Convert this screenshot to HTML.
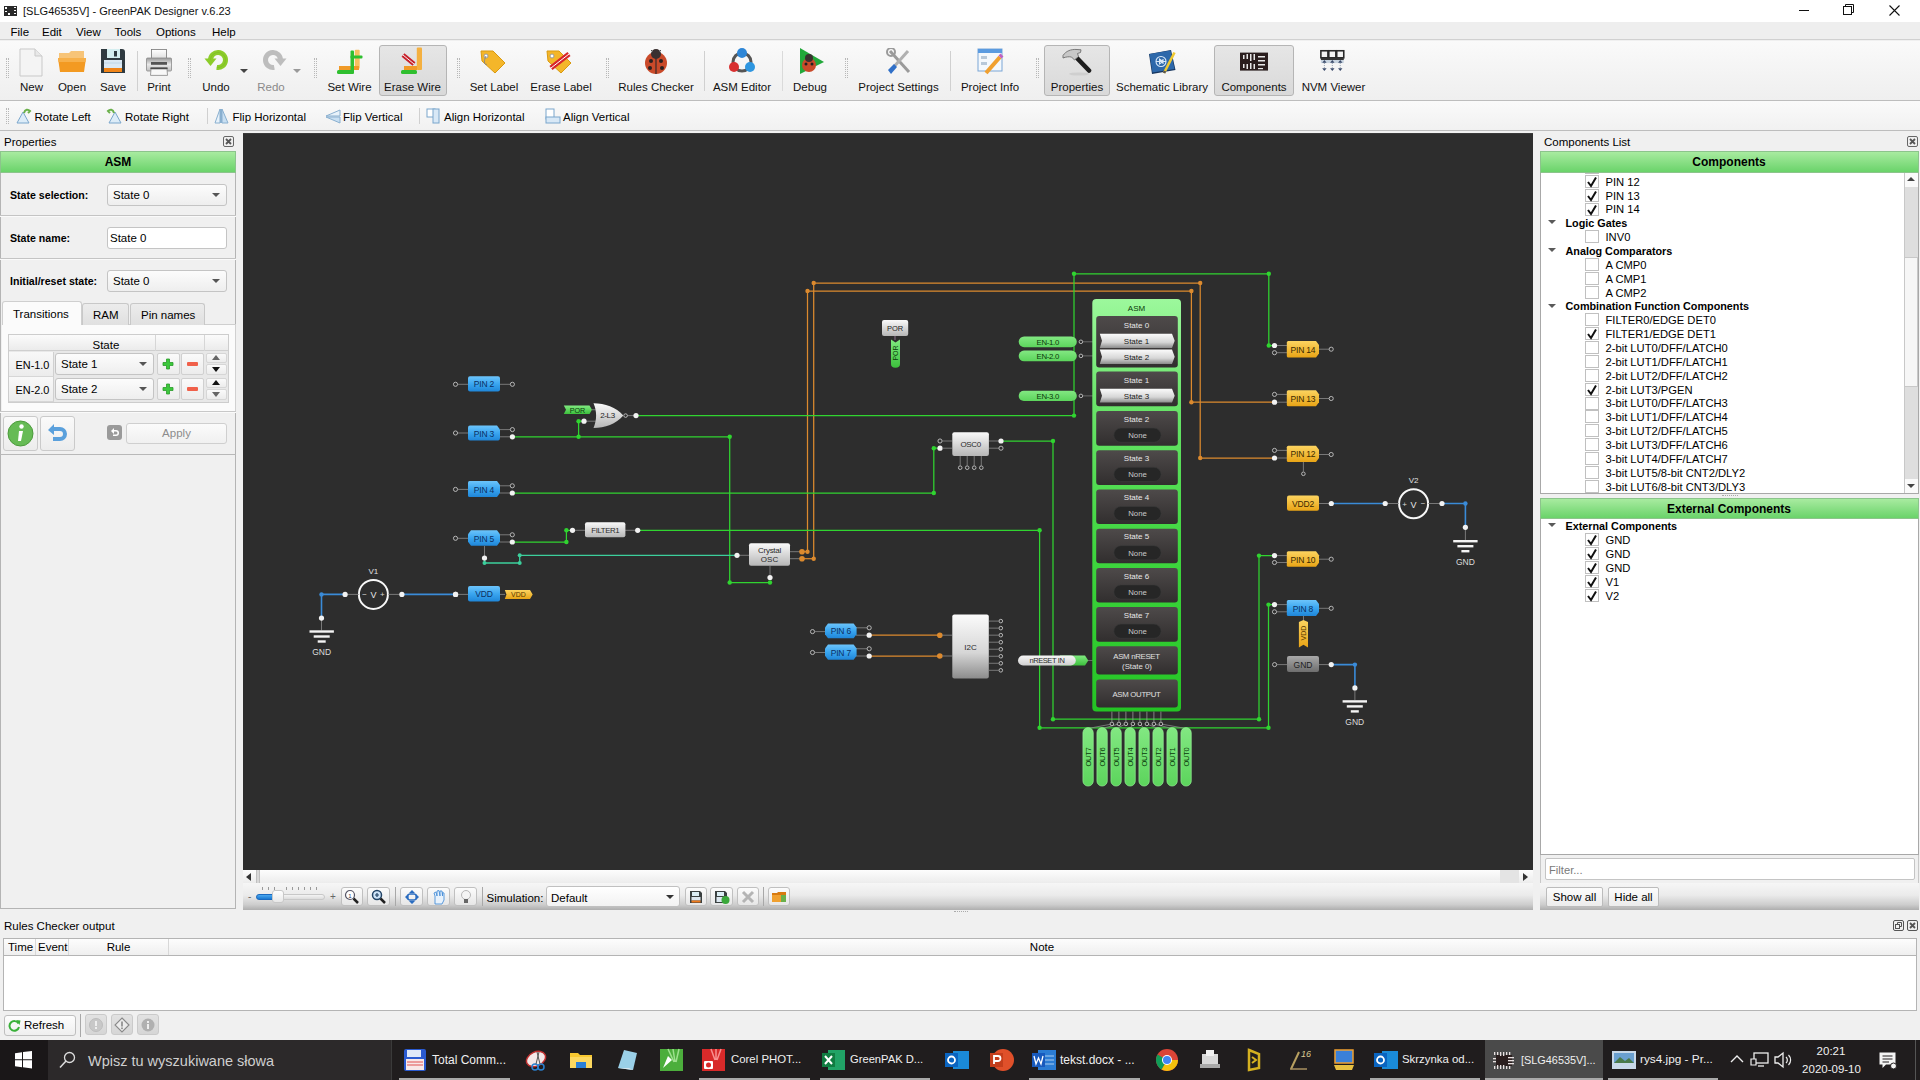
<!DOCTYPE html>
<html><head><meta charset="utf-8">
<style>
*{box-sizing:border-box;margin:0;padding:0}
html,body{width:1920px;height:1080px;overflow:hidden;background:#f0f0f0;font-family:"Liberation Sans",sans-serif;font-size:11.5px;color:#000;position:relative}
.a{position:absolute}
.t{position:absolute;white-space:nowrap;line-height:1}
.c{transform:translateX(-50%)}
#title{left:0;top:0;width:1920px;height:22px;background:#fff}
#menu{left:0;top:22px;width:1920px;height:18px;background:#eeeeee;border-bottom:1px solid #d0d0d0}
#tb1{left:0;top:41px;width:1920px;height:60px;background:linear-gradient(#fafafa,#f3f3f3 60%,#efefef);border-bottom:1px solid #bdbdbd}
#tb2{left:0;top:101px;width:1920px;height:30px;background:linear-gradient(#fafafa,#f1f1f1);border-bottom:1px solid #bdbdbd}
.hl{position:absolute;background:linear-gradient(#e6e6e6,#d9d9d9);border:1px solid #b5b5b5;border-radius:3px}
.sep{position:absolute;width:1px;background:#d0d0d0}
.dsep{position:absolute;width:3px;border-left:1px dotted #b8b8b8;border-right:1px dotted #b8b8b8}
.bold{font-weight:bold}
.panel{position:absolute;background:#f0f0f0}
.combo{position:absolute;background:linear-gradient(#fdfdfd,#efefef);border:1px solid #c5c5c5;border-radius:2px}
.arr{position:absolute;width:0;height:0;border-left:4px solid transparent;border-right:4px solid transparent;border-top:4px solid #505050}
.cb{position:absolute;width:13px;height:13px;border:1px solid #bcbcbc;background:#fff}
.ck{position:absolute;font-size:13px;font-weight:bold;line-height:1}
#canvas{left:243px;top:133px;width:1290px;height:737px;background:#2d2d2d}
#taskbar{left:0;top:1040px;width:1920px;height:40px;background:#211d1e}
</style></head><body>

<div id="title" class="a"></div>
<svg class="a" style="left:2px;top:5px" width="17" height="12"><rect x="2" y="1" width="13" height="10" fill="#2a2a2a"/><g fill="#fff"><rect x="3" y="2" width="2" height="2"/><rect x="3" y="6" width="2" height="1"/><rect x="12" y="2" width="2" height="1"/><rect x="12" y="5" width="2" height="1"/><rect x="12" y="8" width="2" height="1"/><rect x="6" y="8" width="2" height="2"/></g></svg>
<div class="t" style="left:23px;top:5.5px;font-size:11.05px;color:#111">[SLG46535V] - GreenPAK Designer v.6.23</div>
<div class="a" style="left:1799px;top:10px;width:10px;height:1px;background:#111"></div>
<svg class="a" style="left:1843px;top:4px" width="12" height="12"><rect x="0.5" y="2.5" width="8" height="8" fill="none" stroke="#111"/><path d="M2.5 2.5V0.5H10.5V8.5H8.5" fill="none" stroke="#111"/></svg>
<svg class="a" style="left:1889px;top:5px" width="12" height="12"><path d="M0.5 0.5L10.5 10.5M10.5 0.5L0.5 10.5" stroke="#111" stroke-width="1.1"/></svg>
<div id="menu" class="a"></div>
<div class="t" style="left:10.5px;top:27px;font-size:11.5px;">File</div>
<div class="t" style="left:42px;top:27px;font-size:11.5px;">Edit</div>
<div class="t" style="left:76px;top:27px;font-size:11.5px;">View</div>
<div class="t" style="left:114.5px;top:27px;font-size:11.5px;">Tools</div>
<div class="t" style="left:156px;top:27px;font-size:11.5px;">Options</div>
<div class="t" style="left:212px;top:27px;font-size:11.5px;">Help</div>
<div id="tb1" class="a"></div>
<div class="hl" style="left:379px;top:45px;width:68px;height:51px"></div>
<div class="hl" style="left:1044px;top:45px;width:66px;height:51px"></div>
<div class="hl" style="left:1214px;top:45px;width:80px;height:51px"></div>
<div class="sep" style="left:137px;top:51px;height:40px"></div>
<div class="sep" style="left:704px;top:51px;height:40px"></div>
<div class="sep" style="left:950px;top:51px;height:40px"></div>
<div class="sep" style="left:782px;top:51px;height:40px;background:#dadada"></div>
<div class="dsep" style="left:6px;top:58px;height:20px"></div>
<div class="dsep" style="left:188px;top:58px;height:20px"></div>
<div class="dsep" style="left:314px;top:58px;height:20px"></div>
<div class="dsep" style="left:457px;top:58px;height:20px"></div>
<div class="dsep" style="left:606px;top:58px;height:20px"></div>
<div class="dsep" style="left:845px;top:58px;height:20px"></div>
<div class="dsep" style="left:1036px;top:58px;height:20px"></div>
<div class="t c" style="left:31.5px;top:82px;font-size:11.5px;color:#111">New</div>
<div class="t c" style="left:72px;top:82px;font-size:11.5px;color:#111">Open</div>
<div class="t c" style="left:113px;top:82px;font-size:11.5px;color:#111">Save</div>
<div class="t c" style="left:159px;top:82px;font-size:11.5px;color:#111">Print</div>
<div class="t c" style="left:216px;top:82px;font-size:11.5px;color:#111">Undo</div>
<div class="t c" style="left:271px;top:82px;font-size:11.5px;color:#8a8a8a">Redo</div>
<div class="t c" style="left:349.5px;top:82px;font-size:11.5px;color:#111">Set Wire</div>
<div class="t c" style="left:412.5px;top:82px;font-size:11.5px;color:#111">Erase Wire</div>
<div class="t c" style="left:494px;top:82px;font-size:11.5px;color:#111">Set Label</div>
<div class="t c" style="left:561px;top:82px;font-size:11.5px;color:#111">Erase Label</div>
<div class="t c" style="left:656px;top:82px;font-size:11.5px;color:#111">Rules Checker</div>
<div class="t c" style="left:742px;top:82px;font-size:11.5px;color:#111">ASM Editor</div>
<div class="t c" style="left:810px;top:82px;font-size:11.5px;color:#111">Debug</div>
<div class="t c" style="left:898.5px;top:82px;font-size:11.5px;color:#111">Project Settings</div>
<div class="t c" style="left:990px;top:82px;font-size:11.5px;color:#111">Project Info</div>
<div class="t c" style="left:1077px;top:82px;font-size:11.5px;color:#111">Properties</div>
<div class="t c" style="left:1162px;top:82px;font-size:11.5px;color:#111">Schematic Library</div>
<div class="t c" style="left:1254px;top:82px;font-size:11.5px;color:#111">Components</div>
<div class="t c" style="left:1333.5px;top:82px;font-size:11.5px;color:#111">NVM Viewer</div>
<svg class="a" style="left:19px;top:48px" width="30" height="30"><path d="M1 1H16L23 8V28H1Z" fill="#f4f4f4" stroke="#c9c9c9"/><path d="M16 1V8H23" fill="#e8e8e8" stroke="#c9c9c9"/></svg>
<svg class="a" style="left:58px;top:49px" width="30" height="30"><path d="M1 4H11L13 2H26V12H1Z" fill="#f7c478"/><path d="M0 9H28L26 23H2Z" fill="#f39a22"/><path d="M0 9H28L27.5 13H0.5Z" fill="#f7b04a"/></svg>
<svg class="a" style="left:100px;top:48px" width="30" height="30"><path d="M1 1H22Q25 1 25 4V25H1Z" fill="#2f3a40"/><rect x="7" y="1" width="13" height="9" fill="#d4eef0"/><rect x="14" y="3" width="3" height="5.5" fill="#2f3a40"/><rect x="4" y="12" width="18" height="9" fill="#dbe9f4"/><path d="M4 15H22" stroke="#b8d0e4" stroke-width="0.8"/><rect x="4" y="20" width="18" height="4" fill="#f08418"/></svg>
<svg class="a" style="left:146px;top:48px" width="30" height="30"><defs><linearGradient id="pg1" x1="0" y1="0" x2="0" y2="1"><stop offset="0" stop-color="#ffffff"/><stop offset="1" stop-color="#d8d8d8"/></linearGradient><linearGradient id="pg2" x1="0" y1="0" x2="0" y2="1"><stop offset="0" stop-color="#9a9a9a"/><stop offset="0.5" stop-color="#e8e8e8"/><stop offset="1" stop-color="#c0c0c0"/></linearGradient></defs><rect x="5.5" y="1.5" width="15" height="11" fill="url(#pg1)" stroke="#777" stroke-width="0.8"/><rect x="0.5" y="10" width="25" height="13" rx="1" fill="url(#pg2)" stroke="#8a8a8a" stroke-width="0.8"/><rect x="5" y="14" width="16" height="2.8" fill="#555"/><rect x="4.5" y="19.5" width="17" height="1.6" fill="#222"/><path d="M5 21H21L21.5 27.4H4.5Z" fill="#f8f8f8" stroke="#888" stroke-width="0.8"/></svg>
<svg class="a" style="left:204px;top:49px" width="30" height="30"><path d="M6.5 11A7.5 7.5 0 1 1 12.7 18.4" fill="none" stroke="#8ccc2a" stroke-width="5"/><path d="M0.5 9.5H12.5L6.5 17Z" fill="#8ccc2a"/><path d="M6.5 11A7.5 7.5 0 1 1 12.7 18.4" fill="none" stroke="#6aa818" stroke-width="0.6" opacity="0.5"/></svg>
<svg class="a" style="left:259px;top:49px" width="30" height="30"><path d="M21.5 11A7.5 7.5 0 1 0 15.3 18.4" fill="none" stroke="#bdbdbd" stroke-width="5"/><path d="M15.5 9.5H27.5L21.5 17Z" fill="#bdbdbd"/></svg>
<svg class="a" style="left:337px;top:48px" width="30" height="30"><rect x="17.8" y="1.7" width="4.9" height="19" rx="1" fill="#f6c060"/><rect x="2" y="18" width="20" height="4" fill="#f09a28"/><rect x="13.5" y="2.5" width="3.5" height="23" rx="1" fill="#2fbf2f"/><rect x="13.5" y="7.4" width="12" height="3.2" rx="1" fill="#2fbf2f"/><rect x="0" y="22" width="17" height="4" rx="1.5" fill="#2fbf2f"/></svg>
<svg class="a" style="left:400px;top:47px" width="30" height="30"><rect x="16.8" y="0.6" width="5.2" height="22.4" rx="1" fill="#f4b040"/><rect x="4" y="19" width="13" height="4" fill="#f09a28"/><path d="M3 8L14 17" stroke="#c8202a" stroke-width="4.5"/><path d="M3 8L14 17" stroke="#f4f4f4" stroke-width="1"/><rect x="1" y="23" width="16" height="4" rx="1.5" fill="#2fbf2f"/></svg>
<svg class="a" style="left:479px;top:48px" width="30" height="30"><path d="M2 3H14L26 15L16 25L3 13Z" fill="#f4b62a" stroke="#d99a10"/><circle cx="7" cy="8" r="2" fill="#fff" stroke="#999"/><path d="M7 8C4 14 6 18 8 16" stroke="#888" fill="none"/></svg>
<svg class="a" style="left:545px;top:48px" width="30" height="30"><path d="M2 3H14L26 15L16 25L3 13Z" fill="#f4b62a" stroke="#d99a10"/><circle cx="7" cy="8" r="2" fill="#fff" stroke="#999"/><path d="M6 20L24 6" stroke="#d8262a" stroke-width="5"/><path d="M6 20L24 6" stroke="#ffffff" stroke-width="1"/></svg>
<svg class="a" style="left:643px;top:47px" width="30" height="30"><ellipse cx="13" cy="16" rx="11" ry="11" fill="#c94a2a"/><path d="M13 6V27" stroke="#3a2a2a" stroke-width="1.2"/><circle cx="13" cy="7" r="5" fill="#3a3030"/><circle cx="8" cy="14" r="2" fill="#2a2020"/><circle cx="18" cy="14" r="2" fill="#2a2020"/><circle cx="7" cy="21" r="2" fill="#2a2020"/><circle cx="19" cy="21" r="2" fill="#2a2020"/><path d="M8 3L10 5M18 3L16 5" stroke="#555" /></svg>
<svg class="a" style="left:728px;top:47px" width="30" height="30"><circle cx="14" cy="15" r="9" fill="none" stroke="#555" stroke-width="3"/><circle cx="14" cy="6" r="5" fill="#2e86d6"/><circle cx="6" cy="20" r="5" fill="#d83030"/><circle cx="22" cy="20" r="5" fill="#2e96e0"/></svg>
<svg class="a" style="left:797px;top:47px" width="30" height="30"><path d="M3 1L27 15L3 27Z" fill="#22a83a"/><ellipse cx="12" cy="18" rx="7" ry="7" fill="#c94a2a"/><circle cx="12" cy="11" r="4" fill="#3a3030"/><circle cx="9" cy="17" r="1.5" fill="#222"/><circle cx="15" cy="17" r="1.5" fill="#222"/></svg>
<svg class="a" style="left:885px;top:48px" width="30" height="30"><path d="M5 3L24 24" stroke="#9a9a9a" stroke-width="3"/><path d="M23 3L6 22" stroke="#b0b0b0" stroke-width="3"/><circle cx="6" cy="4" r="4" fill="none" stroke="#9a9a9a" stroke-width="2"/><path d="M3 22L9 16L12 19L6 26Z" fill="#3070c8"/></svg>
<svg class="a" style="left:976px;top:47px" width="30" height="30"><rect x="2" y="2" width="24" height="22" fill="#f4f8fc" stroke="#7aa6d6"/><rect x="2" y="2" width="24" height="4" fill="#5b9be0"/><rect x="5" y="9" width="6" height="3" fill="#b8c8d8"/><rect x="5" y="15" width="6" height="3" fill="#b8c8d8"/><path d="M10 26L24 10" stroke="#f0a030" stroke-width="4"/><path d="M24 10L26 8" stroke="#c060c0" stroke-width="4"/></svg>
<svg class="a" style="left:1062px;top:47px" width="30" height="30"><ellipse cx="17" cy="27" rx="10" ry="1.6" fill="#cfcfcf"/><path d="M13.5 9.5L27 23.5" stroke="#1e1e1e" stroke-width="4.6" stroke-linecap="round"/><path d="M1 8.5C4 4 9 2 15 2.5L19 2.8L18.5 5.5L15.5 6.5L16.5 9.5L12.5 13L9.5 10C7 9.5 4 9.8 1 11Z" fill="#c8c8c8" stroke="#6e6e6e" stroke-width="0.9"/></svg>
<svg class="a" style="left:1148px;top:49px" width="30" height="30"><path d="M1 5L23 1L27.5 21L4 25Z" fill="#16355e"/><path d="M1.5 5L22.5 1.5L26.5 20L4.5 23.5Z" fill="#2d68aa"/><circle cx="13" cy="12.5" r="5" fill="none" stroke="#d8e8f8" stroke-width="1.1"/><path d="M8 12.5H18M11.5 10V15L15 12.5Z M15 10V15" stroke="#d8e8f8" fill="none" stroke-width="1.1"/><path d="M16 24L26.5 3.5" stroke="#f0c830" stroke-width="2.6"/><path d="M16 24L17 22" stroke="#555" stroke-width="2.6"/></svg>
<svg class="a" style="left:1239px;top:50px" width="30" height="30"><rect x="1" y="2.6" width="28" height="18" fill="#2a1e1e"/><g fill="#e8e8e8"><rect x="4" y="5" width="1.5" height="4"/><rect x="4" y="14" width="1.5" height="4"/><rect x="7.5" y="4" width="1.5" height="5"/><rect x="11" y="4" width="1.5" height="7"/><rect x="14.5" y="4" width="1.5" height="6"/><rect x="7.5" y="14" width="1.5" height="5"/><rect x="11" y="13" width="1.5" height="6"/><rect x="14.5" y="14" width="1.5" height="5"/><rect x="19" y="6" width="7" height="1.5"/><rect x="19" y="10" width="7" height="1.5"/><rect x="19" y="14" width="7" height="1.5"/><rect x="19" y="18" width="5" height="1.2"/></g><rect x="0" y="0" width="2" height="23" fill="none"/></svg>
<svg class="a" style="left:1320px;top:49px" width="30" height="30"><g transform="scale(0.88)"><g fill="#f4f4f4" stroke="#2a2a2a" stroke-width="1.8"><rect x="1" y="2" width="8" height="8"/><rect x="10" y="2" width="8" height="8"/><rect x="19" y="2" width="8" height="8"/></g><rect x="1" y="10" width="26" height="2.5" fill="#333"/><rect x="1" y="12.5" width="26" height="3.5" fill="#c8d4e0"/><g fill="#3a4a6a"><path d="M2.5 15.5L5 12.5L7.5 15.5Z"/><path d="M11.5 15.5L14 12.5L16.5 15.5Z"/><path d="M20.5 15.5L23 12.5L25.5 15.5Z"/><path d="M2.5 22L5 25L7.5 22Z"/><path d="M11.5 22L14 25L16.5 22Z"/><path d="M20.5 22L23 25L25.5 22Z"/></g><g stroke="#8090a0" stroke-dasharray="1 1.2"><path d="M5 16V22M14 16V22M23 16V22"/></g></g></svg>
<div class="arr" style="left:240px;top:69px;border-top-color:#444"></div>
<div class="arr" style="left:293px;top:69px;border-top-color:#999"></div>
<div id="tb2" class="a"></div>
<div class="dsep" style="left:6px;top:108px;height:16px"></div>
<div class="sep" style="left:207px;top:108px;height:16px"></div>
<div class="sep" style="left:419px;top:108px;height:16px"></div>
<div class="t" style="left:34.5px;top:112px;font-size:11.5px;">Rotate Left</div>
<div class="t" style="left:125px;top:112px;font-size:11.5px;">Rotate Right</div>
<div class="t" style="left:232.5px;top:112px;font-size:11.5px;">Flip Horizontal</div>
<div class="t" style="left:343px;top:112px;font-size:11.5px;">Flip Vertical</div>
<div class="t" style="left:444px;top:112px;font-size:11.5px;">Align Horizontal</div>
<div class="t" style="left:563px;top:112px;font-size:11.5px;">Align Vertical</div>
<svg class="a" style="left:16px;top:108px" width="17" height="17"><path d="M1 15L7 4L13 15Z" fill="#dcecf8" stroke="#7aa6cc"/><path d="M8 5C9 1 12 1 14 3L12 5" stroke="#6ab04a" stroke-width="2" fill="none"/></svg>
<svg class="a" style="left:106px;top:108px" width="17" height="17"><path d="M3 15L9 4L15 15Z" fill="#dcecf8" stroke="#7aa6cc"/><path d="M8 5C7 1 4 1 2 3L4 5" stroke="#6ab04a" stroke-width="2" fill="none"/></svg>
<svg class="a" style="left:214px;top:108px" width="17" height="17"><path d="M1 15L6 1V15Z" fill="#e8f2fa" stroke="#8ab0d0"/><path d="M8 1L14 15H8Z" fill="#c8dff2" stroke="#8ab0d0"/><rect x="6" y="1" width="2" height="14" fill="#8ab0d0"/></svg>
<svg class="a" style="left:325px;top:108px" width="17" height="17"><path d="M1 8L15 2V8Z" fill="#e8f2fa" stroke="#8ab0d0"/><path d="M1 9H15V15Z" fill="#c8dff2" stroke="#8ab0d0"/></svg>
<svg class="a" style="left:426px;top:108px" width="17" height="17"><rect x="1" y="1" width="8" height="8" fill="#fff" stroke="#7aa6cc"/><rect x="7" y="1" width="6" height="14" fill="#d8e8f6" stroke="#7aa6cc"/></svg>
<svg class="a" style="left:545px;top:108px" width="17" height="17"><rect x="1" y="1" width="8" height="10" fill="#fff" stroke="#7aa6cc"/><rect x="1" y="9" width="14" height="6" fill="#d8e8f6" stroke="#7aa6cc"/></svg>
<div class="t" style="left:4px;top:137px;font-size:11.5px;">Properties</div>
<svg class="a" style="left:222px;top:135px" width="13" height="13"><rect x="1.5" y="1.5" width="10" height="10" rx="1.5" fill="none" stroke="#666"/><path d="M4 4L9 9M9 4L4 9" stroke="#555" stroke-width="1.8"/></svg>
<div class="a" style="left:0px;top:151px;width:236px;height:758px;border:1px solid #b4b4b4;border-top:none;background:#f0f0f0"></div>
<div class="a" style="left:0px;top:151px;width:236px;height:22px;background:linear-gradient(#a8eba0,#6ad36a);border:1px solid #8cc48c"></div>
<div class="t c bold" style="left:118px;top:156px;font-size:12px">ASM</div>
<div class="t" style="left:10px;top:190px;font-size:10.6px;font-weight:bold">State selection:</div>
<div class="a" style="left:0px;top:215px;width:236px;height:1px;background:#c4c4c4"></div>
<div class="a" style="left:0px;top:216px;width:236px;height:1px;background:#fafafa"></div>
<div class="t" style="left:10px;top:233px;font-size:10.6px;font-weight:bold">State name:</div>
<div class="a" style="left:0px;top:258px;width:236px;height:1px;background:#c4c4c4"></div>
<div class="a" style="left:0px;top:259px;width:236px;height:1px;background:#fafafa"></div>
<div class="t" style="left:10px;top:276px;font-size:10.6px;font-weight:bold">Initial/reset state:</div>
<div class="a" style="left:107px;top:184px;width:120px;height:22px;background:linear-gradient(#fcfcfc,#eeeeee);border:1px solid #c4c4c4;border-radius:3px"></div>
<div class="t" style="left:113px;top:189.5px;font-size:11.5px;">State 0</div>
<div class="arr" style="left:212px;top:193.0px;border-top-color:#555"></div>
<div class="a" style="left:107px;top:227px;width:120px;height:22px;background:#fff;border:1px solid #c4c4c4;border-radius:3px"></div>
<div class="t" style="left:110px;top:233px;font-size:11.5px;">State 0</div>
<div class="a" style="left:107px;top:270px;width:120px;height:22px;background:linear-gradient(#fcfcfc,#eeeeee);border:1px solid #c4c4c4;border-radius:3px"></div>
<div class="t" style="left:113px;top:275.5px;font-size:11.5px;">State 0</div>
<div class="arr" style="left:212px;top:279.0px;border-top-color:#555"></div>
<div class="a" style="left:2px;top:324px;width:234px;height:88px;background:#fbfbfb;border-top:1px solid #cfcfcf;border-right:1px solid #d0d0d0"></div>
<div class="a" style="left:82px;top:303px;width:47px;height:22px;background:linear-gradient(#ececec,#e0e0e0);border:1px solid #c8c8c8;border-bottom:none;border-radius:3px 3px 0 0"></div>
<div class="a" style="left:130px;top:303px;width:75px;height:22px;background:linear-gradient(#ececec,#e0e0e0);border:1px solid #c8c8c8;border-bottom:none;border-radius:3px 3px 0 0"></div>
<div class="a" style="left:2px;top:301px;width:80px;height:24px;background:#fbfbfb;border:1px solid #cfcfcf;border-bottom:none;border-radius:3px 3px 0 0"></div>
<div class="t" style="left:13px;top:309px;font-size:11.5px;">Transitions</div>
<div class="t" style="left:93px;top:310px;font-size:11.5px;">RAM</div>
<div class="t" style="left:141px;top:310px;font-size:11.5px;">Pin names</div>
<div class="a" style="left:8px;top:334px;width:221px;height:69px;background:#e8e8e8;border:1px solid #cdcdcd"></div>
<div class="a" style="left:9px;top:335px;width:219px;height:16px;background:linear-gradient(#fbfbfb,#ebebeb);border-bottom:1px solid #cfcfcf"></div>
<div class="a" style="left:155px;top:335px;width:1px;height:16px;background:#d6d6d6"></div>
<div class="a" style="left:204px;top:335px;width:1px;height:16px;background:#d6d6d6"></div>
<div class="t" style="left:92.5px;top:340px;font-size:11.5px;">State</div>
<div class="a" style="left:9px;top:352px;width:45px;height:25px;background:linear-gradient(#f8f8f8,#ececec);border-bottom:1px solid #d6d6d6;border-right:1px solid #d0d0d0"></div>
<div class="t" style="left:15.5px;top:360.3px;font-size:10.9px;">EN-1.0</div>
<div class="a" style="left:55px;top:353px;width:99px;height:22px;background:linear-gradient(#fcfcfc,#eeeeee);border:1px solid #c4c4c4;border-radius:3px"></div>
<div class="t" style="left:61px;top:358.5px;font-size:11.5px;">State 1</div>
<div class="arr" style="left:139px;top:362.0px;border-top-color:#555"></div>
<div class="a" style="left:157px;top:353px;width:23px;height:22px;background:linear-gradient(#fafafa,#ececec);border:1px solid #d0d0d0;border-radius:2px"></div>
<div class="a" style="left:181px;top:353px;width:23px;height:22px;background:linear-gradient(#fafafa,#ececec);border:1px solid #d0d0d0;border-radius:2px"></div>
<svg class="a" style="left:162px;top:358px" width="12" height="12"><path d="M4.5 1H7.5V4.5H11V7.5H7.5V11H4.5V7.5H1V4.5H4.5Z" fill="#3cc83c" stroke="#2a9a2a" stroke-width="0.8"/></svg>
<div class="a" style="left:187px;top:362px;width:11px;height:4px;background:#f0604a;border-radius:1px"></div>
<div class="a" style="left:206px;top:353px;width:21px;height:10px;background:linear-gradient(#fafafa,#ececec);border:1px solid #d6d6d6;border-radius:2px"></div>
<div class="a" style="left:206px;top:364px;width:21px;height:11px;background:linear-gradient(#fafafa,#ececec);border:1px solid #d6d6d6;border-radius:2px"></div>
<div class="a" style="left:212px;top:355px;width:0;height:0;border-left:4.5px solid transparent;border-right:4.5px solid transparent;border-bottom:5px solid #666"></div>
<div class="a" style="left:212px;top:367px;width:0;height:0;border-left:4.5px solid transparent;border-right:4.5px solid transparent;border-top:5px solid #111"></div>
<div class="a" style="left:9px;top:377px;width:45px;height:25px;background:linear-gradient(#f8f8f8,#ececec);border-bottom:1px solid #d6d6d6;border-right:1px solid #d0d0d0"></div>
<div class="t" style="left:15.5px;top:385.3px;font-size:10.9px;">EN-2.0</div>
<div class="a" style="left:55px;top:378px;width:99px;height:22px;background:linear-gradient(#fcfcfc,#eeeeee);border:1px solid #c4c4c4;border-radius:3px"></div>
<div class="t" style="left:61px;top:383.5px;font-size:11.5px;">State 2</div>
<div class="arr" style="left:139px;top:387.0px;border-top-color:#555"></div>
<div class="a" style="left:157px;top:378px;width:23px;height:22px;background:linear-gradient(#fafafa,#ececec);border:1px solid #d0d0d0;border-radius:2px"></div>
<div class="a" style="left:181px;top:378px;width:23px;height:22px;background:linear-gradient(#fafafa,#ececec);border:1px solid #d0d0d0;border-radius:2px"></div>
<svg class="a" style="left:162px;top:383px" width="12" height="12"><path d="M4.5 1H7.5V4.5H11V7.5H7.5V11H4.5V7.5H1V4.5H4.5Z" fill="#3cc83c" stroke="#2a9a2a" stroke-width="0.8"/></svg>
<div class="a" style="left:187px;top:387px;width:11px;height:4px;background:#f0604a;border-radius:1px"></div>
<div class="a" style="left:206px;top:378px;width:21px;height:10px;background:linear-gradient(#fafafa,#ececec);border:1px solid #d6d6d6;border-radius:2px"></div>
<div class="a" style="left:206px;top:389px;width:21px;height:11px;background:linear-gradient(#fafafa,#ececec);border:1px solid #d6d6d6;border-radius:2px"></div>
<div class="a" style="left:212px;top:380px;width:0;height:0;border-left:4.5px solid transparent;border-right:4.5px solid transparent;border-bottom:5px solid #111"></div>
<div class="a" style="left:212px;top:392px;width:0;height:0;border-left:4.5px solid transparent;border-right:4.5px solid transparent;border-top:5px solid #666"></div>
<div class="a" style="left:0px;top:411px;width:236px;height:1px;background:#c8c8c8"></div>
<div class="a" style="left:0px;top:412px;width:236px;height:1px;background:#fafafa"></div>
<div class="a" style="left:3px;top:416px;width:35px;height:35px;background:linear-gradient(#fafafa,#ececec);border:1px solid #cacaca;border-radius:3px"></div>
<div class="a" style="left:40px;top:416px;width:35px;height:35px;background:linear-gradient(#fafafa,#ececec);border:1px solid #cacaca;border-radius:3px"></div>
<svg class="a" style="left:7px;top:420px" width="28" height="28"><circle cx="13.5" cy="13.5" r="12.5" fill="#66bb55" stroke="#4a9a3a"/><circle cx="14.5" cy="6.5" r="2.2" fill="#fff"/><path d="M12 11H16L14 21H11Z" fill="#fff"/></svg>
<svg class="a" style="left:45px;top:422px" width="26" height="24"><path d="M3 8L9 2V5H15A7 7 0 0 1 15 19H8V15H15A3 3 0 0 0 15 9H9V13Z" fill="#5aa0dc"/></svg>
<div class="a" style="left:107px;top:425px;width:15px;height:15px;background:#9a9a9a;border-radius:3px"></div>
<svg class="a" style="left:108px;top:426px" width="13" height="13"><path d="M3 5L6 2V4H8A3 3 0 0 1 8 10H5V8.5H8A1.5 1.5 0 0 0 8 5.5H6V8Z" fill="#fff"/></svg>
<div class="a" style="left:126px;top:423px;width:101px;height:21px;background:linear-gradient(#fbfbfb,#f0f0f0);border:1px solid #cfcfcf;border-radius:3px"></div>
<div class="t c" style="left:176.5px;top:428px;font-size:11.5px;color:#8c8c8c">Apply</div>
<div class="a" style="left:0px;top:454px;width:236px;height:1px;background:#b8b8b8"></div>
<div id="canvas" class="a"></div><div class="a" style="left:243px;top:133px;width:1290px;height:1px;background:#3a3a3a"></div><svg class="a" style="left:243px;top:133px;font-family:Liberation Sans" width="1290" height="737" viewBox="243 133 1290 737"><defs>
<linearGradient id="gb" x1="0" y1="0" x2="0" y2="1"><stop offset="0" stop-color="#6cc4fb"/><stop offset="0.5" stop-color="#3aa6f0"/><stop offset="1" stop-color="#1f86d8"/></linearGradient>
<linearGradient id="go" x1="0" y1="0" x2="0" y2="1"><stop offset="0" stop-color="#fcd460"/><stop offset="1" stop-color="#e8a416"/></linearGradient>
<linearGradient id="gg" x1="0" y1="0" x2="0" y2="1"><stop offset="0" stop-color="#fafafa"/><stop offset="1" stop-color="#b6b6b6"/></linearGradient>
<linearGradient id="gd" x1="0" y1="0" x2="0" y2="1"><stop offset="0" stop-color="#a8a8a8"/><stop offset="1" stop-color="#6e6e6e"/></linearGradient>
<linearGradient id="gt" x1="0" y1="0" x2="0" y2="1"><stop offset="0" stop-color="#80ea80"/><stop offset="1" stop-color="#3cbf3c"/></linearGradient>
<linearGradient id="gp" x1="0" y1="0" x2="0" y2="1"><stop offset="0" stop-color="#82e882"/><stop offset="1" stop-color="#5cd45c"/></linearGradient>
<linearGradient id="gs" x1="0" y1="0" x2="0" y2="1"><stop offset="0" stop-color="#4e4a4a"/><stop offset="1" stop-color="#312e2e"/></linearGradient>
<linearGradient id="ga" x1="0" y1="0" x2="0" y2="1"><stop offset="0" stop-color="#fbfbfb"/><stop offset="0.6" stop-color="#d6d6d6"/><stop offset="1" stop-color="#8c8c8c"/></linearGradient>
<linearGradient id="gasm" x1="0" y1="0" x2="0" y2="1"><stop offset="0" stop-color="#9cf89c"/><stop offset="0.25" stop-color="#6ae46a"/><stop offset="0.6" stop-color="#40d640"/><stop offset="1" stop-color="#24c424"/></linearGradient>
<linearGradient id="gw" x1="0" y1="0" x2="0" y2="1"><stop offset="0" stop-color="#f6f6f6"/><stop offset="1" stop-color="#cfcfcf"/></linearGradient>
</defs>
<path d="M813.7 558.7 L813.7 283 L1200.2 283 L1200.2 458 L1274.5 458" fill="none" stroke="#dc8a2e" stroke-width="1.25"/>
<path d="M807.5 551.7 L807.5 291 L1191.4 291 L1191.4 402.2 L1274.5 402.2" fill="none" stroke="#dc8a2e" stroke-width="1.25"/>
<path d="M790 551.7L800 551.7" stroke="#8c8c8c" stroke-width="0.8"/>
<path d="M802 551.7 L807.5 551.7" fill="none" stroke="#dc8a2e" stroke-width="1.2"/>
<path d="M790 558.7L800 558.7" stroke="#8c8c8c" stroke-width="0.8"/>
<path d="M802 558.7 L813.7 558.7" fill="none" stroke="#dc8a2e" stroke-width="1.2"/>
<path d="M869.2 635.2 L939.8 635.2" fill="none" stroke="#dc8a2e" stroke-width="1.25"/>
<path d="M869.2 656 L939.8 656" fill="none" stroke="#dc8a2e" stroke-width="1.25"/>
<path d="M636 415.6 L1074 415.6 L1074 273.8 L1268.8 273.8 L1268.8 345.5 L1274.5 345.5" fill="none" stroke="#30d430" stroke-width="1.25"/>
<path d="M512.4 436.8 L729.7 436.8 L729.7 582.5 L770 582.5" fill="none" stroke="#30d430" stroke-width="1.25"/>
<path d="M578.6 436.8 L578.6 421.2 L584 421.2" fill="none" stroke="#30d430" stroke-width="1.25"/>
<path d="M512.3 493 L933.8 493 L933.8 448.2 L940 448.2" fill="none" stroke="#30d430" stroke-width="1.25"/>
<path d="M512.3 542 L566.4 542 L566.4 530.3 L572.5 530.3" fill="none" stroke="#30d430" stroke-width="1.25"/>
<path d="M637.7 530.3 L1039.6 530.3 L1039.6 727.8 L1268.5 727.8 L1268.5 604.6 L1274.6 604.6" fill="none" stroke="#30d430" stroke-width="1.25"/>
<path d="M1001 441 L1053 441 L1053 719.2 L1259 719.2 L1259 555.6 L1274.6 555.6" fill="none" stroke="#30d430" stroke-width="1.25"/>
<path d="M484.5 558 L484.5 563 L519.7 563 L519.7 555.3 L737 555.3" fill="none" stroke="#3ccf9c" stroke-width="1.3"/>
<path d="M345.1 594.4 L321.5 594.4 L321.5 618.1" fill="none" stroke="#3a8bd8" stroke-width="1.6"/>
<path d="M401.9 594.4 L455.6 594.4" fill="none" stroke="#3a8bd8" stroke-width="1.6"/>
<path d="M1331.3 503.5 L1385.2 503.5" fill="none" stroke="#3a8bd8" stroke-width="1.6"/>
<path d="M1442 503.5 L1465.4 503.5 L1465.4 527.3" fill="none" stroke="#3a8bd8" stroke-width="1.6"/>
<path d="M1331.25 664.6 L1354.9 664.6 L1354.9 687.9" fill="none" stroke="#3a8bd8" stroke-width="1.6"/>
<circle cx="578.6" cy="436.8" r="2.2" fill="#30d430"/>
<circle cx="578.6" cy="421.2" r="2.2" fill="#30d430"/>
<circle cx="729.7" cy="436.8" r="2.2" fill="#30d430"/>
<circle cx="729.7" cy="582.5" r="2.2" fill="#30d430"/>
<circle cx="770" cy="582.5" r="2.2" fill="#30d430"/>
<circle cx="933.8" cy="493" r="2.2" fill="#30d430"/>
<circle cx="933.8" cy="448.2" r="2.2" fill="#30d430"/>
<circle cx="566.4" cy="542" r="2.2" fill="#30d430"/>
<circle cx="566.4" cy="530.3" r="2.2" fill="#30d430"/>
<circle cx="1074" cy="415.6" r="2.2" fill="#30d430"/>
<circle cx="1074" cy="273.8" r="2.2" fill="#30d430"/>
<circle cx="1268.8" cy="273.8" r="2.2" fill="#30d430"/>
<circle cx="1268.8" cy="345.5" r="2.2" fill="#30d430"/>
<circle cx="1039.6" cy="530.3" r="2.2" fill="#30d430"/>
<circle cx="1039.6" cy="727.8" r="2.2" fill="#30d430"/>
<circle cx="1268.5" cy="727.8" r="2.2" fill="#30d430"/>
<circle cx="1268.5" cy="604.6" r="2.2" fill="#30d430"/>
<circle cx="1053" cy="441" r="2.2" fill="#30d430"/>
<circle cx="1053" cy="719.2" r="2.2" fill="#30d430"/>
<circle cx="1259" cy="719.2" r="2.2" fill="#30d430"/>
<circle cx="1259" cy="555.6" r="2.2" fill="#30d430"/>
<circle cx="484.5" cy="563" r="2" fill="#3ccf9c"/>
<circle cx="519.7" cy="563" r="2" fill="#3ccf9c"/>
<circle cx="519.7" cy="555.3" r="2" fill="#3ccf9c"/>
<circle cx="813.7" cy="283" r="2.2" fill="#dc8a2e"/>
<circle cx="807.5" cy="291" r="2.2" fill="#dc8a2e"/>
<circle cx="1200.2" cy="283" r="2.2" fill="#dc8a2e"/>
<circle cx="1200.2" cy="458" r="2.2" fill="#dc8a2e"/>
<circle cx="1191.4" cy="291" r="2.2" fill="#dc8a2e"/>
<circle cx="1191.4" cy="402.2" r="2.2" fill="#dc8a2e"/>
<circle cx="807.5" cy="551.7" r="2.2" fill="#dc8a2e"/>
<circle cx="813.7" cy="558.7" r="2.2" fill="#dc8a2e"/>
<circle cx="802" cy="551.7" r="2.8" fill="#dc8a2e"/>
<circle cx="802" cy="558.7" r="2.8" fill="#dc8a2e"/>
<circle cx="939.8" cy="635.2" r="2.8" fill="#dc8a2e"/>
<circle cx="939.8" cy="656" r="2.8" fill="#dc8a2e"/>
<circle cx="321.5" cy="594.4" r="2.2" fill="#3a8bd8"/>
<circle cx="1465.4" cy="503.5" r="2.2" fill="#3a8bd8"/>
<circle cx="1354.9" cy="664.6" r="2.2" fill="#3a8bd8"/>
<circle cx="455.5" cy="384.3" r="2.07" fill="#2d2d2d" stroke="#c4c4c4" stroke-width="0.9"/>
<path d="M458 384.3L468 384.3" stroke="#8c8c8c" stroke-width="0.8"/>
<path d="M500 384.3L510 384.3" stroke="#8c8c8c" stroke-width="0.8"/>
<circle cx="512.4" cy="384.3" r="2.07" fill="#2d2d2d" stroke="#c4c4c4" stroke-width="0.9"/>
<rect x="468" y="376.3" width="32" height="15.199999999999989" rx="2" fill="url(#gb)"/>
<text x="484.0" y="384.4" font-size="8.5" fill="#0c2f62" text-anchor="middle" dominant-baseline="central" letter-spacing="-0.2">PIN 2</text>
<circle cx="455.5" cy="433" r="2.07" fill="#2d2d2d" stroke="#c4c4c4" stroke-width="0.9"/>
<path d="M458 433L468 433" stroke="#8c8c8c" stroke-width="0.8"/>
<path d="M500 429.6L510 429.6" stroke="#8c8c8c" stroke-width="0.8"/>
<path d="M500 436.8L510 436.8" stroke="#8c8c8c" stroke-width="0.8"/>
<circle cx="512.4" cy="429.6" r="2.07" fill="#2d2d2d" stroke="#c4c4c4" stroke-width="0.9"/>
<circle cx="512.4" cy="436.8" r="2.6" fill="#f2f2f2"/>
<path d="M470 425.6H497L500 429.6V437.5Q500 440.5 498 440.5H470Q468 440.5 468 438.5V427.6Q468 425.6 470 425.6Z" fill="url(#gb)"/>
<text x="484.0" y="433.55" font-size="8.5" fill="#0c2f62" text-anchor="middle" dominant-baseline="central" letter-spacing="-0.2">PIN 3</text>
<circle cx="455.5" cy="489.4" r="2.07" fill="#2d2d2d" stroke="#c4c4c4" stroke-width="0.9"/>
<path d="M458 489.4L468 489.4" stroke="#8c8c8c" stroke-width="0.8"/>
<path d="M500 485.8L510 485.8" stroke="#8c8c8c" stroke-width="0.8"/>
<path d="M500 493L510 493" stroke="#8c8c8c" stroke-width="0.8"/>
<circle cx="512.3" cy="485.8" r="2.07" fill="#2d2d2d" stroke="#c4c4c4" stroke-width="0.9"/>
<circle cx="512.3" cy="493" r="2.6" fill="#f2f2f2"/>
<path d="M469.5 481H497L500 485V493L497 497H469.5Q468 497 468 495.5V482.5Q468 481 469.5 481Z" fill="url(#gb)"/>
<text x="484.0" y="489.5" font-size="8.5" fill="#0c2f62" text-anchor="middle" dominant-baseline="central" letter-spacing="-0.2">PIN 4</text>
<circle cx="455.5" cy="538.3" r="2.07" fill="#2d2d2d" stroke="#c4c4c4" stroke-width="0.9"/>
<path d="M458 538.3L468 538.3" stroke="#8c8c8c" stroke-width="0.8"/>
<path d="M500 534.8L510 534.8" stroke="#8c8c8c" stroke-width="0.8"/>
<path d="M500 542L510 542" stroke="#8c8c8c" stroke-width="0.8"/>
<circle cx="512.3" cy="534.8" r="2.07" fill="#2d2d2d" stroke="#c4c4c4" stroke-width="0.9"/>
<circle cx="512.3" cy="542" r="2.6" fill="#f2f2f2"/>
<path d="M484.5 546L484.5 556" stroke="#8c8c8c" stroke-width="0.8"/>
<path d="M471 530.3H497L500 534.3V541.8L497 545.8H471L468 541.8V534.3Z" fill="url(#gb)"/>
<text x="484.0" y="538.55" font-size="8.5" fill="#0c2f62" text-anchor="middle" dominant-baseline="central" letter-spacing="-0.2">PIN 5</text>
<circle cx="484.5" cy="558" r="2.6" fill="#f2f2f2"/>
<circle cx="455.6" cy="594.4" r="2.6" fill="#f2f2f2"/>
<path d="M458 594.4L468 594.4" stroke="#8c8c8c" stroke-width="0.8"/>
<path d="M500 594.4L505 594.4" stroke="#8c8c8c" stroke-width="0.8"/>
<rect x="468" y="586" width="32" height="15.600000000000023" rx="2" fill="url(#gb)"/>
<text x="484.0" y="594.3" font-size="8.5" fill="#0c2f62" text-anchor="middle" dominant-baseline="central" letter-spacing="-0.2">VDD</text>
<path d="M504.8 590H530L532.7 594.5L530 599H504.8L506.5 594.5Z" fill="url(#go)"/>
<text x="518.5" y="594.8" font-size="7" fill="#5a3a00" text-anchor="middle" dominant-baseline="central" >VDD</text>
<circle cx="373.4" cy="594.4" r="14.5" fill="none" stroke="#f8f8f8" stroke-width="2"/>
<path d="M347 594.4L359 594.4" stroke="#8c8c8c" stroke-width="0.8"/>
<path d="M388 594.4L400 594.4" stroke="#8c8c8c" stroke-width="0.8"/>
<text x="373.4" y="595" font-size="9" fill="#e8e8e8" text-anchor="middle" dominant-baseline="central" >V</text>
<text x="364.5" y="594" font-size="8" fill="#d8d8d8" text-anchor="middle" dominant-baseline="central" >−</text>
<text x="382.3" y="594" font-size="8" fill="#d8d8d8" text-anchor="middle" dominant-baseline="central" >+</text>
<text x="373.4" y="571.3" font-size="8" fill="#e0e0e0" text-anchor="middle" dominant-baseline="central" >V1</text>
<circle cx="345.1" cy="594.4" r="2.6" fill="#f2f2f2"/>
<circle cx="401.9" cy="594.4" r="2.6" fill="#f2f2f2"/>
<circle cx="455.6" cy="594.4" r="2.6" fill="#f2f2f2"/>
<path d="M321.5 620L321.5 630.3" stroke="#8c8c8c" stroke-width="0.8"/>
<circle cx="321.5" cy="618.1" r="2.6" fill="#f2f2f2"/>
<rect x="309.5" y="630.3" width="24.4" height="2.4" fill="#f4f4f4"/>
<rect x="313.7" y="635.3" width="16" height="2.4" fill="#f4f4f4"/>
<rect x="317.7" y="640.3" width="8" height="2.4" fill="#f4f4f4"/>
<text x="321.7" y="652.1" font-size="8.5" fill="#dcdcdc" text-anchor="middle" dominant-baseline="central" >GND</text>
<path d="M563.8 405.5H589.5L592 409.75L589.5 414H563.8L566 409.75Z" fill="url(#gt)"/>
<text x="577.5" y="410" font-size="7.2" fill="#0a3a0a" text-anchor="middle" dominant-baseline="central" >POR</text>
<path d="M592 409.75L597 409.75" stroke="#8c8c8c" stroke-width="0.8"/>
<path d="M586 421.2L597 421.2" stroke="#8c8c8c" stroke-width="0.8"/>
<path d="M625 415.6L634 415.6" stroke="#8c8c8c" stroke-width="0.8"/>
<path d="M593.5 403.2C605 403.2 616 407 623.3 415.5C616 424 605 427.9 593.5 427.9C597 420 597 411 593.5 403.2Z" fill="url(#gg)"/>
<text x="607.5" y="415.8" font-size="8" fill="#222" text-anchor="middle" dominant-baseline="central" letter-spacing="-0.4">2-L3</text>
<circle cx="625.6" cy="415.6" r="1.8" fill="#2d2d2d" stroke="#c4c4c4" stroke-width="0.9"/>
<circle cx="636" cy="415.6" r="2.6" fill="#f2f2f2"/>
<circle cx="584" cy="421.2" r="2.6" fill="#f2f2f2"/>
<circle cx="572.5" cy="530.3" r="2.6" fill="#f2f2f2"/>
<path d="M575 530.3L585 530.3" stroke="#8c8c8c" stroke-width="0.8"/>
<path d="M625 530.3L635 530.3" stroke="#8c8c8c" stroke-width="0.8"/>
<circle cx="637.7" cy="530.3" r="2.6" fill="#f2f2f2"/>
<rect x="585" y="522.2" width="40.4" height="15" rx="2" fill="url(#gg)"/>
<text x="605.2" y="530" font-size="7.8" fill="#2a2a2a" text-anchor="middle" dominant-baseline="central" letter-spacing="-0.4">FILTER1</text>
<path d="M739 555.3L749 555.3" stroke="#8c8c8c" stroke-width="0.8"/>
<path d="M770 566L770 576" stroke="#8c8c8c" stroke-width="0.8"/>
<rect x="749" y="543.3" width="41" height="22.5" rx="2" fill="url(#gg)"/>
<text x="769.5" y="550" font-size="8" fill="#2a2a2a" text-anchor="middle" dominant-baseline="central" letter-spacing="-0.3">Crystal</text>
<text x="769.5" y="559.5" font-size="8" fill="#2a2a2a" text-anchor="middle" dominant-baseline="central" >OSC</text>
<circle cx="737" cy="555.3" r="2.6" fill="#f2f2f2"/>
<circle cx="770" cy="577.5" r="2.6" fill="#f2f2f2"/>
<rect x="882" y="320" width="26.2" height="16" rx="2" fill="url(#gg)"/>
<text x="895.1" y="328.3" font-size="7.5" fill="#222" text-anchor="middle" dominant-baseline="central" >POR</text>
<path d="M895 336L895 340" stroke="#a080a0" stroke-width="0.8"/>
<path d="M891 339.5L895.5 342.5L900 339.5V364Q900 367.8 895.5 367.8Q891 367.8 891 364Z" fill="url(#gt)"/>
<text x="895.5" y="353" font-size="7" fill="#0a3a0a" text-anchor="middle" dominant-baseline="central" transform="rotate(-90 895.5 353)">POR</text>
<circle cx="940" cy="441" r="2.07" fill="#2d2d2d" stroke="#c4c4c4" stroke-width="0.9"/>
<circle cx="940" cy="448.2" r="2.6" fill="#f2f2f2"/>
<path d="M942 441L952 441" stroke="#8c8c8c" stroke-width="0.8"/>
<path d="M942 448.2L952 448.2" stroke="#8c8c8c" stroke-width="0.8"/>
<path d="M989 441L999 441" stroke="#8c8c8c" stroke-width="0.8"/>
<path d="M989 448.2L999 448.2" stroke="#8c8c8c" stroke-width="0.8"/>
<circle cx="1001" cy="441" r="2.6" fill="#f2f2f2"/>
<circle cx="1001" cy="448.2" r="2.07" fill="#2d2d2d" stroke="#c4c4c4" stroke-width="0.9"/>
<path d="M960.2 456L960.2 465.5" stroke="#8c8c8c" stroke-width="0.8"/>
<circle cx="960.2" cy="467.7" r="1.8" fill="#2d2d2d" stroke="#c4c4c4" stroke-width="0.9"/>
<path d="M967.2 456L967.2 465.5" stroke="#8c8c8c" stroke-width="0.8"/>
<circle cx="967.2" cy="467.7" r="1.8" fill="#2d2d2d" stroke="#c4c4c4" stroke-width="0.9"/>
<path d="M974.2 456L974.2 465.5" stroke="#8c8c8c" stroke-width="0.8"/>
<circle cx="974.2" cy="467.7" r="1.8" fill="#2d2d2d" stroke="#c4c4c4" stroke-width="0.9"/>
<path d="M981.3 456L981.3 465.5" stroke="#8c8c8c" stroke-width="0.8"/>
<circle cx="981.3" cy="467.7" r="1.8" fill="#2d2d2d" stroke="#c4c4c4" stroke-width="0.9"/>
<rect x="952.3" y="432.2" width="36.6" height="23.7" rx="2" fill="url(#gg)"/>
<text x="970.6" y="444.5" font-size="8" fill="#2a2a2a" text-anchor="middle" dominant-baseline="central" letter-spacing="-0.4">OSC0</text>
<path d="M942 635.2L952 635.2" stroke="#8c8c8c" stroke-width="0.8"/>
<path d="M942 656L952 656" stroke="#8c8c8c" stroke-width="0.8"/>
<path d="M989 621.1L998.5 621.1" stroke="#8c8c8c" stroke-width="0.8"/>
<circle cx="1000.8" cy="621.1" r="1.8" fill="#2d2d2d" stroke="#c4c4c4" stroke-width="0.9"/>
<path d="M989 628.13L998.5 628.13" stroke="#8c8c8c" stroke-width="0.8"/>
<circle cx="1000.8" cy="628.13" r="1.8" fill="#2d2d2d" stroke="#c4c4c4" stroke-width="0.9"/>
<path d="M989 635.16L998.5 635.16" stroke="#8c8c8c" stroke-width="0.8"/>
<circle cx="1000.8" cy="635.16" r="1.8" fill="#2d2d2d" stroke="#c4c4c4" stroke-width="0.9"/>
<path d="M989 642.19L998.5 642.19" stroke="#8c8c8c" stroke-width="0.8"/>
<circle cx="1000.8" cy="642.19" r="1.8" fill="#2d2d2d" stroke="#c4c4c4" stroke-width="0.9"/>
<path d="M989 649.22L998.5 649.22" stroke="#8c8c8c" stroke-width="0.8"/>
<circle cx="1000.8" cy="649.22" r="1.8" fill="#2d2d2d" stroke="#c4c4c4" stroke-width="0.9"/>
<path d="M989 656.25L998.5 656.25" stroke="#8c8c8c" stroke-width="0.8"/>
<circle cx="1000.8" cy="656.25" r="1.8" fill="#2d2d2d" stroke="#c4c4c4" stroke-width="0.9"/>
<path d="M989 663.28L998.5 663.28" stroke="#8c8c8c" stroke-width="0.8"/>
<circle cx="1000.8" cy="663.28" r="1.8" fill="#2d2d2d" stroke="#c4c4c4" stroke-width="0.9"/>
<path d="M989 670.3100000000001L998.5 670.3100000000001" stroke="#8c8c8c" stroke-width="0.8"/>
<circle cx="1000.8" cy="670.3100000000001" r="1.8" fill="#2d2d2d" stroke="#c4c4c4" stroke-width="0.9"/>
<rect x="952.3" y="614.4" width="36.5" height="64" rx="2" fill="url(#ga)"/>
<text x="970.5" y="647" font-size="8" fill="#2a2a2a" text-anchor="middle" dominant-baseline="central" >I2C</text>
<circle cx="812.5" cy="631.6" r="2.07" fill="#2d2d2d" stroke="#c4c4c4" stroke-width="0.9"/>
<path d="M815 631.6L825 631.6" stroke="#8c8c8c" stroke-width="0.8"/>
<path d="M856 627.8L867 627.8" stroke="#8c8c8c" stroke-width="0.8"/>
<path d="M856 635.2L867 635.2" stroke="#8c8c8c" stroke-width="0.8"/>
<circle cx="869.2" cy="627.8" r="2.07" fill="#2d2d2d" stroke="#c4c4c4" stroke-width="0.9"/>
<circle cx="869.2" cy="635.2" r="2.6" fill="#f2f2f2"/>
<path d="M828 623.4H853.6L856.6 627.4V634.3L853.6 638.3H828L825 634.3V627.4Z" fill="url(#gb)"/>
<text x="840.8" y="631.3499999999999" font-size="8.5" fill="#0c2f62" text-anchor="middle" dominant-baseline="central" letter-spacing="-0.2">PIN 6</text>
<circle cx="812.5" cy="652.5" r="2.07" fill="#2d2d2d" stroke="#c4c4c4" stroke-width="0.9"/>
<path d="M815 652.5L825 652.5" stroke="#8c8c8c" stroke-width="0.8"/>
<path d="M856 648.75L867 648.75" stroke="#8c8c8c" stroke-width="0.8"/>
<path d="M856 656L867 656" stroke="#8c8c8c" stroke-width="0.8"/>
<circle cx="869.2" cy="648.75" r="2.07" fill="#2d2d2d" stroke="#c4c4c4" stroke-width="0.9"/>
<circle cx="869.2" cy="656" r="2.6" fill="#f2f2f2"/>
<path d="M828 644.5H853.6L856.6 648.5V655.7L853.6 659.7H828L825 655.7V648.5Z" fill="url(#gb)"/>
<text x="840.8" y="652.6" font-size="8.5" fill="#0c2f62" text-anchor="middle" dominant-baseline="central" letter-spacing="-0.2">PIN 7</text>
<path d="M1083 341.79999999999995L1100 341.79999999999995" stroke="#7a7a7a" stroke-width="0.8"/>
<circle cx="1080.9" cy="341.79999999999995" r="1.8" fill="#2d2d2d" stroke="#c4c4c4" stroke-width="0.9"/>
<rect x="1018.7" y="336.4" width="58.09999999999991" height="10.800000000000011" rx="5.400000000000006" fill="url(#gp)"/>
<text x="1047.75" y="342.09999999999997" font-size="7.8" fill="#0a3a0a" text-anchor="middle" dominant-baseline="central" letter-spacing="-0.3">EN-1.0</text>
<path d="M1083 355.9L1100 355.9" stroke="#7a7a7a" stroke-width="0.8"/>
<circle cx="1080.9" cy="355.9" r="1.8" fill="#2d2d2d" stroke="#c4c4c4" stroke-width="0.9"/>
<rect x="1018.7" y="350.6" width="58.09999999999991" height="10.599999999999966" rx="5.299999999999983" fill="url(#gp)"/>
<text x="1047.75" y="356.2" font-size="7.8" fill="#0a3a0a" text-anchor="middle" dominant-baseline="central" letter-spacing="-0.3">EN-2.0</text>
<path d="M1083 395.9L1100 395.9" stroke="#7a7a7a" stroke-width="0.8"/>
<circle cx="1080.9" cy="395.9" r="1.8" fill="#2d2d2d" stroke="#c4c4c4" stroke-width="0.9"/>
<rect x="1018.7" y="390.8" width="58.09999999999991" height="10.199999999999989" rx="5.099999999999994" fill="url(#gp)"/>
<text x="1047.75" y="396.2" font-size="7.8" fill="#0a3a0a" text-anchor="middle" dominant-baseline="central" letter-spacing="-0.3">EN-3.0</text>
<path d="M1060 655.5H1085L1088.3 660.5L1085 665.6H1060Z" fill="url(#gt)"/>
<path d="M1088 660.5L1096 660.5" stroke="#7a7a7a" stroke-width="0.8"/>
<rect x="1018" y="655.5" width="57.799999999999955" height="10.100000000000023" rx="5.050000000000011" fill="url(#gw)"/>
<text x="1046.9" y="660.8499999999999" font-size="7.5" fill="#2a2a2a" text-anchor="middle" dominant-baseline="central" letter-spacing="-0.4">nRESET IN</text>
<rect x="1092.3" y="299.1" width="88.7" height="412.5" rx="4" fill="url(#gasm)"/>
<text x="1136.5" y="308" font-size="8" fill="#0a3a0a" text-anchor="middle" dominant-baseline="central" >ASM</text>
<rect x="1096.2" y="316" width="81.6" height="51.5" rx="3" fill="url(#gs)"/>
<text x="1136.5" y="325.2" font-size="8" fill="#e8e8e8" text-anchor="middle" dominant-baseline="central" >State 0</text>
<path d="M1099.8 333.7H1172L1174.7 340.85L1172 348H1099.8L1102 340.85Z" fill="url(#ga)"/>
<text x="1136.5" y="341.35" font-size="8" fill="#1a1a1a" text-anchor="middle" dominant-baseline="central" >State 1</text>
<path d="M1099.8 349.6H1172L1174.7 356.75L1172 363.9H1099.8L1102 356.75Z" fill="url(#ga)"/>
<text x="1136.5" y="357.25" font-size="8" fill="#1a1a1a" text-anchor="middle" dominant-baseline="central" >State 2</text>
<rect x="1096.2" y="371.6" width="81.6" height="34.599999999999966" rx="3" fill="url(#gs)"/>
<text x="1136.5" y="380.2" font-size="8" fill="#e8e8e8" text-anchor="middle" dominant-baseline="central" >State 1</text>
<path d="M1099.8 388.7H1172L1174.7 395.65L1172 402.6H1099.8L1102 395.65Z" fill="url(#ga)"/>
<text x="1136.5" y="396.15" font-size="8" fill="#1a1a1a" text-anchor="middle" dominant-baseline="central" >State 3</text>
<rect x="1096.2" y="411.1" width="81.6" height="34.60000000000002" rx="3" fill="url(#gs)"/>
<text x="1136.5" y="419.3" font-size="8" fill="#e8e8e8" text-anchor="middle" dominant-baseline="central" >State 2</text>
<rect x="1113.8" y="428.1" width="47.3" height="14.2" rx="7.1" fill="#262626" stroke="#3a3a3a" stroke-width="0.6"/>
<text x="1137.5" y="435.5" font-size="7.8" fill="#c8c8c8" text-anchor="middle" dominant-baseline="central" >None</text>
<rect x="1096.2" y="450.3" width="81.6" height="34.60000000000002" rx="3" fill="url(#gs)"/>
<text x="1136.5" y="458.5" font-size="8" fill="#e8e8e8" text-anchor="middle" dominant-baseline="central" >State 3</text>
<rect x="1113.8" y="467.3" width="47.3" height="14.2" rx="7.1" fill="#262626" stroke="#3a3a3a" stroke-width="0.6"/>
<text x="1137.5" y="474.7" font-size="7.8" fill="#c8c8c8" text-anchor="middle" dominant-baseline="central" >None</text>
<rect x="1096.2" y="489.5" width="81.6" height="34.60000000000002" rx="3" fill="url(#gs)"/>
<text x="1136.5" y="497.7" font-size="8" fill="#e8e8e8" text-anchor="middle" dominant-baseline="central" >State 4</text>
<rect x="1113.8" y="506.5" width="47.3" height="14.2" rx="7.1" fill="#262626" stroke="#3a3a3a" stroke-width="0.6"/>
<text x="1137.5" y="513.9" font-size="7.8" fill="#c8c8c8" text-anchor="middle" dominant-baseline="central" >None</text>
<rect x="1096.2" y="528.7" width="81.6" height="34.60000000000002" rx="3" fill="url(#gs)"/>
<text x="1136.5" y="536.9000000000001" font-size="8" fill="#e8e8e8" text-anchor="middle" dominant-baseline="central" >State 5</text>
<rect x="1113.8" y="545.7" width="47.3" height="14.2" rx="7.1" fill="#262626" stroke="#3a3a3a" stroke-width="0.6"/>
<text x="1137.5" y="553.1" font-size="7.8" fill="#c8c8c8" text-anchor="middle" dominant-baseline="central" >None</text>
<rect x="1096.2" y="567.9000000000001" width="81.6" height="34.60000000000002" rx="3" fill="url(#gs)"/>
<text x="1136.5" y="576.1000000000001" font-size="8" fill="#e8e8e8" text-anchor="middle" dominant-baseline="central" >State 6</text>
<rect x="1113.8" y="584.9000000000001" width="47.3" height="14.2" rx="7.1" fill="#262626" stroke="#3a3a3a" stroke-width="0.6"/>
<text x="1137.5" y="592.3000000000001" font-size="7.8" fill="#c8c8c8" text-anchor="middle" dominant-baseline="central" >None</text>
<rect x="1096.2" y="607.1" width="81.6" height="34.60000000000002" rx="3" fill="url(#gs)"/>
<text x="1136.5" y="615.3000000000001" font-size="8" fill="#e8e8e8" text-anchor="middle" dominant-baseline="central" >State 7</text>
<rect x="1113.8" y="624.1" width="47.3" height="14.2" rx="7.1" fill="#262626" stroke="#3a3a3a" stroke-width="0.6"/>
<text x="1137.5" y="631.5" font-size="7.8" fill="#c8c8c8" text-anchor="middle" dominant-baseline="central" >None</text>
<rect x="1096.2" y="646.3" width="81.6" height="28.100000000000023" rx="3" fill="url(#gs)"/>
<text x="1136.5" y="656" font-size="7.8" fill="#e0e0e0" text-anchor="middle" dominant-baseline="central" letter-spacing="-0.3">ASM nRESET</text>
<text x="1137" y="666" font-size="7.8" fill="#e0e0e0" text-anchor="middle" dominant-baseline="central" >(State 0)</text>
<rect x="1096.2" y="679.6" width="81.6" height="27.799999999999955" rx="3" fill="url(#gs)"/>
<text x="1136.5" y="694" font-size="7.8" fill="#e0e0e0" text-anchor="middle" dominant-baseline="central" letter-spacing="-0.3">ASM OUTPUT</text>
<path d="M1111.9 711.6L1111.9 721.6" stroke="#9a9a9a" stroke-width="0.8"/>
<path d="M1111.9 724L1088.1 728.5" stroke="#8a8a8a" stroke-width="0.8"/>
<path d="M1118.9 711.6L1118.9 721.6" stroke="#9a9a9a" stroke-width="0.8"/>
<path d="M1118.9 724L1102.1 728.5" stroke="#8a8a8a" stroke-width="0.8"/>
<path d="M1125.9 711.6L1125.9 721.6" stroke="#9a9a9a" stroke-width="0.8"/>
<path d="M1125.9 724L1116.1 728.5" stroke="#8a8a8a" stroke-width="0.8"/>
<path d="M1132.9 711.6L1132.9 721.6" stroke="#9a9a9a" stroke-width="0.8"/>
<path d="M1132.9 724L1130.1 728.5" stroke="#8a8a8a" stroke-width="0.8"/>
<path d="M1139.9 711.6L1139.9 721.6" stroke="#9a9a9a" stroke-width="0.8"/>
<path d="M1139.9 724L1144.1 728.5" stroke="#8a8a8a" stroke-width="0.8"/>
<path d="M1146.9 711.6L1146.9 721.6" stroke="#9a9a9a" stroke-width="0.8"/>
<path d="M1146.9 724L1158.1 728.5" stroke="#8a8a8a" stroke-width="0.8"/>
<path d="M1153.9 711.6L1153.9 721.6" stroke="#9a9a9a" stroke-width="0.8"/>
<path d="M1153.9 724L1172.1 728.5" stroke="#8a8a8a" stroke-width="0.8"/>
<path d="M1160.9 711.6L1160.9 721.6" stroke="#9a9a9a" stroke-width="0.8"/>
<path d="M1160.9 724L1186.1 728.5" stroke="#8a8a8a" stroke-width="0.8"/>
<circle cx="1111.9" cy="723.9" r="1.8" fill="#2d2d2d" stroke="#c4c4c4" stroke-width="0.9"/>
<circle cx="1118.9" cy="723.9" r="1.8" fill="#2d2d2d" stroke="#c4c4c4" stroke-width="0.9"/>
<circle cx="1125.9" cy="723.9" r="1.8" fill="#2d2d2d" stroke="#c4c4c4" stroke-width="0.9"/>
<circle cx="1132.9" cy="723.9" r="1.8" fill="#2d2d2d" stroke="#c4c4c4" stroke-width="0.9"/>
<circle cx="1139.9" cy="723.9" r="1.8" fill="#2d2d2d" stroke="#c4c4c4" stroke-width="0.9"/>
<circle cx="1146.9" cy="723.9" r="1.8" fill="#2d2d2d" stroke="#c4c4c4" stroke-width="0.9"/>
<circle cx="1153.9" cy="723.9" r="1.8" fill="#2d2d2d" stroke="#c4c4c4" stroke-width="0.9"/>
<circle cx="1160.9" cy="723.9" r="1.8" fill="#2d2d2d" stroke="#c4c4c4" stroke-width="0.9"/>
<rect x="1082.8999999999999" y="727.6" width="10.4" height="58.5" rx="5.2" fill="url(#gp)" stroke="#9af59a" stroke-width="0.6"/>
<text x="1088.1" y="757" font-size="7.5" fill="#0a3a0a" text-anchor="middle" dominant-baseline="central" transform="rotate(-90 1088.1 757)" letter-spacing="-0.3">OUT7</text>
<rect x="1096.8999999999999" y="727.6" width="10.4" height="58.5" rx="5.2" fill="url(#gp)" stroke="#9af59a" stroke-width="0.6"/>
<text x="1102.1" y="757" font-size="7.5" fill="#0a3a0a" text-anchor="middle" dominant-baseline="central" transform="rotate(-90 1102.1 757)" letter-spacing="-0.3">OUT6</text>
<rect x="1110.8999999999999" y="727.6" width="10.4" height="58.5" rx="5.2" fill="url(#gp)" stroke="#9af59a" stroke-width="0.6"/>
<text x="1116.1" y="757" font-size="7.5" fill="#0a3a0a" text-anchor="middle" dominant-baseline="central" transform="rotate(-90 1116.1 757)" letter-spacing="-0.3">OUT5</text>
<rect x="1124.8999999999999" y="727.6" width="10.4" height="58.5" rx="5.2" fill="url(#gp)" stroke="#9af59a" stroke-width="0.6"/>
<text x="1130.1" y="757" font-size="7.5" fill="#0a3a0a" text-anchor="middle" dominant-baseline="central" transform="rotate(-90 1130.1 757)" letter-spacing="-0.3">OUT4</text>
<rect x="1138.8999999999999" y="727.6" width="10.4" height="58.5" rx="5.2" fill="url(#gp)" stroke="#9af59a" stroke-width="0.6"/>
<text x="1144.1" y="757" font-size="7.5" fill="#0a3a0a" text-anchor="middle" dominant-baseline="central" transform="rotate(-90 1144.1 757)" letter-spacing="-0.3">OUT3</text>
<rect x="1152.8999999999999" y="727.6" width="10.4" height="58.5" rx="5.2" fill="url(#gp)" stroke="#9af59a" stroke-width="0.6"/>
<text x="1158.1" y="757" font-size="7.5" fill="#0a3a0a" text-anchor="middle" dominant-baseline="central" transform="rotate(-90 1158.1 757)" letter-spacing="-0.3">OUT2</text>
<rect x="1166.8999999999999" y="727.6" width="10.4" height="58.5" rx="5.2" fill="url(#gp)" stroke="#9af59a" stroke-width="0.6"/>
<text x="1172.1" y="757" font-size="7.5" fill="#0a3a0a" text-anchor="middle" dominant-baseline="central" transform="rotate(-90 1172.1 757)" letter-spacing="-0.3">OUT1</text>
<rect x="1180.8999999999999" y="727.6" width="10.4" height="58.5" rx="5.2" fill="url(#gp)" stroke="#9af59a" stroke-width="0.6"/>
<text x="1186.1" y="757" font-size="7.5" fill="#0a3a0a" text-anchor="middle" dominant-baseline="central" transform="rotate(-90 1186.1 757)" letter-spacing="-0.3">OUT0</text>
<path d="M1277 345.5L1287 345.5" stroke="#8c8c8c" stroke-width="0.8"/>
<path d="M1277 352.7L1287 352.7" stroke="#8c8c8c" stroke-width="0.8"/>
<path d="M1319 349.2L1329 349.2" stroke="#8c8c8c" stroke-width="0.8"/>
<path d="M1288.3 341H1316L1319 345V353.4L1316 357.4H1288.3Q1286.8 357.4 1286.8 355.9V342.5Q1286.8 341 1288.3 341Z" fill="url(#go)"/>
<text x="1302.9" y="349.7" font-size="8.5" fill="#3a2800" text-anchor="middle" dominant-baseline="central" letter-spacing="-0.2">PIN 14</text>
<circle cx="1274.5" cy="345.5" r="2.6" fill="#f2f2f2"/>
<circle cx="1274.5" cy="352.7" r="2.07" fill="#2d2d2d" stroke="#c4c4c4" stroke-width="0.9"/>
<circle cx="1331.2" cy="349.2" r="2.07" fill="#2d2d2d" stroke="#c4c4c4" stroke-width="0.9"/>
<path d="M1277 394.4L1287 394.4" stroke="#8c8c8c" stroke-width="0.8"/>
<path d="M1277 402.2L1287 402.2" stroke="#8c8c8c" stroke-width="0.8"/>
<path d="M1319 398.5L1329 398.5" stroke="#8c8c8c" stroke-width="0.8"/>
<path d="M1288.3 390.3H1316L1319 394.3V402.2L1316 406.2H1288.3Q1286.8 406.2 1286.8 404.7V391.8Q1286.8 390.3 1288.3 390.3Z" fill="url(#go)"/>
<text x="1302.9" y="398.75" font-size="8.5" fill="#3a2800" text-anchor="middle" dominant-baseline="central" letter-spacing="-0.2">PIN 13</text>
<circle cx="1274.5" cy="394.4" r="2.07" fill="#2d2d2d" stroke="#c4c4c4" stroke-width="0.9"/>
<circle cx="1274.5" cy="402.2" r="2.6" fill="#f2f2f2"/>
<circle cx="1331.2" cy="398.5" r="2.07" fill="#2d2d2d" stroke="#c4c4c4" stroke-width="0.9"/>
<path d="M1277 450.4L1287 450.4" stroke="#8c8c8c" stroke-width="0.8"/>
<path d="M1277 458L1287 458" stroke="#8c8c8c" stroke-width="0.8"/>
<path d="M1319 454.5L1329 454.5" stroke="#8c8c8c" stroke-width="0.8"/>
<path d="M1288.3 445.7H1316L1319 449.7V458L1316 462H1288.3Q1286.8 462 1286.8 460.5V447.2Q1286.8 445.7 1288.3 445.7Z" fill="url(#go)"/>
<text x="1302.9" y="454.35" font-size="8.5" fill="#3a2800" text-anchor="middle" dominant-baseline="central" letter-spacing="-0.2">PIN 12</text>
<circle cx="1274.5" cy="450.4" r="2.07" fill="#2d2d2d" stroke="#c4c4c4" stroke-width="0.9"/>
<circle cx="1274.5" cy="458" r="2.6" fill="#f2f2f2"/>
<circle cx="1331.2" cy="454.5" r="2.07" fill="#2d2d2d" stroke="#c4c4c4" stroke-width="0.9"/>
<path d="M1303.4 462L1303.4 471.5" stroke="#8c8c8c" stroke-width="0.8"/>
<circle cx="1303.4" cy="473.8" r="1.8" fill="#2d2d2d" stroke="#c4c4c4" stroke-width="0.9"/>
<path d="M1277 555.6L1287 555.6" stroke="#8c8c8c" stroke-width="0.8"/>
<path d="M1277 562.5L1287 562.5" stroke="#8c8c8c" stroke-width="0.8"/>
<path d="M1319 559.2L1329 559.2" stroke="#8c8c8c" stroke-width="0.8"/>
<path d="M1288.3 551.2H1316L1319 555.2V562.8L1316 566.8H1288.3Q1286.8 566.8 1286.8 565.3V552.7Q1286.8 551.2 1288.3 551.2Z" fill="url(#go)"/>
<text x="1302.9" y="559.5" font-size="8.5" fill="#3a2800" text-anchor="middle" dominant-baseline="central" letter-spacing="-0.2">PIN 10</text>
<circle cx="1274.5" cy="555.6" r="2.6" fill="#f2f2f2"/>
<circle cx="1274.5" cy="562.5" r="2.07" fill="#2d2d2d" stroke="#c4c4c4" stroke-width="0.9"/>
<circle cx="1331.2" cy="559.2" r="2.07" fill="#2d2d2d" stroke="#c4c4c4" stroke-width="0.9"/>
<path d="M1277 604.6L1287 604.6" stroke="#8c8c8c" stroke-width="0.8"/>
<path d="M1277 611.8L1287 611.8" stroke="#8c8c8c" stroke-width="0.8"/>
<path d="M1319 608.3L1329 608.3" stroke="#8c8c8c" stroke-width="0.8"/>
<path d="M1288.3 600H1316L1319 604V612.1L1316 616.1H1288.3Q1286.8 616.1 1286.8 614.6V601.5Q1286.8 600 1288.3 600Z" fill="url(#gb)"/>
<text x="1302.9" y="608.55" font-size="8.5" fill="#0c2f62" text-anchor="middle" dominant-baseline="central" letter-spacing="-0.2">PIN 8</text>
<circle cx="1274.5" cy="604.6" r="2.6" fill="#f2f2f2"/>
<circle cx="1274.5" cy="611.8" r="2.07" fill="#2d2d2d" stroke="#c4c4c4" stroke-width="0.9"/>
<circle cx="1331.2" cy="608.3" r="2.07" fill="#2d2d2d" stroke="#c4c4c4" stroke-width="0.9"/>
<path d="M1303.5 616L1303.5 620" stroke="#8c8c8c" stroke-width="0.8"/>
<path d="M1298.9 622L1303.45 619.9L1308 622V647.6L1303.45 644.8L1298.9 647.6Z" fill="url(#go)"/>
<text x="1303.45" y="633" font-size="7" fill="#5a3a00" text-anchor="middle" dominant-baseline="central" transform="rotate(-90 1303.45 633)">VDD</text>
<path d="M1319 503.5L1329 503.5" stroke="#8c8c8c" stroke-width="0.8"/>
<rect x="1287" y="495.4" width="32" height="15.300000000000011" rx="2" fill="url(#go)"/>
<text x="1303.0" y="503.54999999999995" font-size="8.5" fill="#3a2800" text-anchor="middle" dominant-baseline="central" letter-spacing="-0.2">VDD2</text>
<circle cx="1331.3" cy="503.5" r="2.6" fill="#f2f2f2"/>
<circle cx="1413.6" cy="503.8" r="14.5" fill="none" stroke="#f8f8f8" stroke-width="2"/>
<path d="M1387 503.5L1399 503.5" stroke="#8c8c8c" stroke-width="0.8"/>
<path d="M1428 503.5L1440 503.5" stroke="#8c8c8c" stroke-width="0.8"/>
<text x="1413.6" y="504.5" font-size="9" fill="#e8e8e8" text-anchor="middle" dominant-baseline="central" >V</text>
<text x="1404.5" y="504" font-size="8" fill="#d8d8d8" text-anchor="middle" dominant-baseline="central" >+</text>
<text x="1423" y="503.5" font-size="8" fill="#d8d8d8" text-anchor="middle" dominant-baseline="central" >−</text>
<text x="1413.6" y="480.5" font-size="8" fill="#e0e0e0" text-anchor="middle" dominant-baseline="central" >V2</text>
<circle cx="1385.2" cy="503.5" r="2.6" fill="#f2f2f2"/>
<circle cx="1442" cy="503.5" r="2.6" fill="#f2f2f2"/>
<path d="M1465.4 529L1465.4 540" stroke="#8c8c8c" stroke-width="0.8"/>
<circle cx="1465.4" cy="527.3" r="2.6" fill="#f2f2f2"/>
<rect x="1453.2" y="540" width="24.4" height="2.4" fill="#f4f4f4"/>
<rect x="1457.4" y="545" width="16" height="2.4" fill="#f4f4f4"/>
<rect x="1461.4" y="550" width="8" height="2.4" fill="#f4f4f4"/>
<text x="1465.4" y="562.2" font-size="8.5" fill="#dcdcdc" text-anchor="middle" dominant-baseline="central" >GND</text>
<circle cx="1274.6" cy="664.6" r="2.07" fill="#2d2d2d" stroke="#c4c4c4" stroke-width="0.9"/>
<path d="M1277 664.6L1287 664.6" stroke="#8c8c8c" stroke-width="0.8"/>
<path d="M1319 664.6L1329 664.6" stroke="#8c8c8c" stroke-width="0.8"/>
<rect x="1287" y="656" width="32" height="16" rx="2" fill="url(#gd)"/>
<text x="1303" y="664.5" font-size="8.5" fill="#1e1e1e" text-anchor="middle" dominant-baseline="central" >GND</text>
<circle cx="1331.25" cy="664.6" r="2.6" fill="#f2f2f2"/>
<path d="M1354.9 690L1354.9 700" stroke="#8c8c8c" stroke-width="0.8"/>
<circle cx="1354.9" cy="687.9" r="2.6" fill="#f2f2f2"/>
<rect x="1342.6" y="700.2" width="24.4" height="2.4" fill="#f4f4f4"/>
<rect x="1346.8" y="705.2" width="16" height="2.4" fill="#f4f4f4"/>
<rect x="1350.8" y="710.2" width="8" height="2.4" fill="#f4f4f4"/>
<text x="1354.8" y="722" font-size="8.5" fill="#dcdcdc" text-anchor="middle" dominant-baseline="central" >GND</text></svg>
<div class="t" style="left:1544px;top:137px;font-size:11.5px;">Components List</div>
<svg class="a" style="left:1906px;top:135px" width="13" height="13"><rect x="1.5" y="1.5" width="10" height="10" rx="1.5" fill="none" stroke="#666"/><path d="M4 4L9 9M9 4L4 9" stroke="#555" stroke-width="1.8"/></svg>
<div class="a" style="left:1540px;top:151px;width:379px;height:22px;background:linear-gradient(#a8eba0,#6ad36a);border:1px solid #8cc48c"></div>
<div class="t c bold" style="left:1729px;top:156px;font-size:12px">Components</div>
<div class="a" style="left:1540px;top:173px;width:379px;height:321px;background:#fff;border:1px solid #a8a8a8;border-top:none"></div>
<div class="a" style="left:1904px;top:173px;width:14px;height:320px;background:#dedede;border-left:1px solid #c8c8c8"></div>
<div class="a" style="left:1904px;top:173px;width:14px;height:14px;background:#fafafa;border-left:1px solid #c8c8c8"></div>
<div class="a" style="left:1904px;top:479px;width:14px;height:14px;background:#fafafa;border-left:1px solid #c8c8c8"></div>
<div class="a" style="left:1904px;top:257px;width:14px;height:130px;background:#f6f6f6;border:1px solid #c8c8c8"></div>
<div class="a" style="left:1907px;top:177px;width:0;height:0;border-left:4px solid transparent;border-right:4px solid transparent;border-bottom:4px solid #444"></div>
<div class="a" style="left:1907px;top:484px;width:0;height:0;border-left:4px solid transparent;border-right:4px solid transparent;border-top:4px solid #444"></div>
<div class="a" style="left:1541px;top:173px;width:363px;height:320px;overflow:hidden">
<div class="a" style="left:-1541px;top:-173px;width:1920px;height:1080px">
<div class="a" style="left:1585px;top:161px;width:14px;height:13px;background:#fff;border:1px solid #c0c0c0"></div>
<div class="a" style="left:1585px;top:174.8px;width:14px;height:13.0px;background:#fff;border:1px solid #c0c0c0"></div>
<svg class="a" style="left:1586px;top:175.8px" width="12" height="12"><path d="M2 6L5 10L10 1.5" fill="none" stroke="#111" stroke-width="2"/></svg>
<div class="t" style="left:1605.5px;top:176.70000000000002px;font-size:11.2px;">PIN 12</div>
<div class="a" style="left:1585px;top:188.66000000000003px;width:14px;height:13.0px;background:#fff;border:1px solid #c0c0c0"></div>
<svg class="a" style="left:1586px;top:189.66000000000003px" width="12" height="12"><path d="M2 6L5 10L10 1.5" fill="none" stroke="#111" stroke-width="2"/></svg>
<div class="t" style="left:1605.5px;top:190.56000000000003px;font-size:11.2px;">PIN 13</div>
<div class="a" style="left:1585px;top:202.52px;width:14px;height:13.0px;background:#fff;border:1px solid #c0c0c0"></div>
<svg class="a" style="left:1586px;top:203.52px" width="12" height="12"><path d="M2 6L5 10L10 1.5" fill="none" stroke="#111" stroke-width="2"/></svg>
<div class="t" style="left:1605.5px;top:204.42000000000002px;font-size:11.2px;">PIN 14</div>
<div class="a" style="left:1548px;top:220.38px;width:0;height:0;border-left:4px solid transparent;border-right:4px solid transparent;border-top:4.5px solid #5a5a5a"></div>
<div class="t" style="left:1565.5px;top:218.07999999999998px;font-size:10.8px;font-weight:bold">Logic Gates</div>
<div class="a" style="left:1585px;top:230.24px;width:14px;height:13.0px;background:#fff;border:1px solid #c0c0c0"></div>
<div class="t" style="left:1605.5px;top:232.14000000000001px;font-size:11.2px;">INV0</div>
<div class="a" style="left:1548px;top:248.10000000000002px;width:0;height:0;border-left:4px solid transparent;border-right:4px solid transparent;border-top:4.5px solid #5a5a5a"></div>
<div class="t" style="left:1565.5px;top:245.8px;font-size:10.8px;font-weight:bold">Analog Comparators</div>
<div class="a" style="left:1585px;top:257.96000000000004px;width:14px;height:13.0px;background:#fff;border:1px solid #c0c0c0"></div>
<div class="t" style="left:1605.5px;top:259.86px;font-size:11.2px;">A CMP0</div>
<div class="a" style="left:1585px;top:271.82px;width:14px;height:13.0px;background:#fff;border:1px solid #c0c0c0"></div>
<div class="t" style="left:1605.5px;top:273.71999999999997px;font-size:11.2px;">A CMP1</div>
<div class="a" style="left:1585px;top:285.68px;width:14px;height:13.0px;background:#fff;border:1px solid #c0c0c0"></div>
<div class="t" style="left:1605.5px;top:287.58px;font-size:11.2px;">A CMP2</div>
<div class="a" style="left:1548px;top:303.54px;width:0;height:0;border-left:4px solid transparent;border-right:4px solid transparent;border-top:4.5px solid #5a5a5a"></div>
<div class="t" style="left:1565.5px;top:301.24px;font-size:10.8px;font-weight:bold">Combination Function Components</div>
<div class="a" style="left:1585px;top:313.4px;width:14px;height:13.0px;background:#fff;border:1px solid #c0c0c0"></div>
<div class="t" style="left:1605.5px;top:315.29999999999995px;font-size:11.2px;">FILTER0/EDGE DET0</div>
<div class="a" style="left:1585px;top:327.26px;width:14px;height:13.0px;background:#fff;border:1px solid #c0c0c0"></div>
<svg class="a" style="left:1586px;top:328.26px" width="12" height="12"><path d="M2 6L5 10L10 1.5" fill="none" stroke="#111" stroke-width="2"/></svg>
<div class="t" style="left:1605.5px;top:329.15999999999997px;font-size:11.2px;">FILTER1/EDGE DET1</div>
<div class="a" style="left:1585px;top:341.12px;width:14px;height:13.0px;background:#fff;border:1px solid #c0c0c0"></div>
<div class="t" style="left:1605.5px;top:343.02px;font-size:11.2px;">2-bit LUT0/DFF/LATCH0</div>
<div class="a" style="left:1585px;top:354.98px;width:14px;height:13.0px;background:#fff;border:1px solid #c0c0c0"></div>
<div class="t" style="left:1605.5px;top:356.88px;font-size:11.2px;">2-bit LUT1/DFF/LATCH1</div>
<div class="a" style="left:1585px;top:368.84000000000003px;width:14px;height:13.0px;background:#fff;border:1px solid #c0c0c0"></div>
<div class="t" style="left:1605.5px;top:370.74px;font-size:11.2px;">2-bit LUT2/DFF/LATCH2</div>
<div class="a" style="left:1585px;top:382.7px;width:14px;height:13.0px;background:#fff;border:1px solid #c0c0c0"></div>
<svg class="a" style="left:1586px;top:383.7px" width="12" height="12"><path d="M2 6L5 10L10 1.5" fill="none" stroke="#111" stroke-width="2"/></svg>
<div class="t" style="left:1605.5px;top:384.59999999999997px;font-size:11.2px;">2-bit LUT3/PGEN</div>
<div class="a" style="left:1585px;top:396.56px;width:14px;height:13.0px;background:#fff;border:1px solid #c0c0c0"></div>
<div class="t" style="left:1605.5px;top:398.46px;font-size:11.2px;">3-bit LUT0/DFF/LATCH3</div>
<div class="a" style="left:1585px;top:410.42px;width:14px;height:13.0px;background:#fff;border:1px solid #c0c0c0"></div>
<div class="t" style="left:1605.5px;top:412.32px;font-size:11.2px;">3-bit LUT1/DFF/LATCH4</div>
<div class="a" style="left:1585px;top:424.28px;width:14px;height:13.0px;background:#fff;border:1px solid #c0c0c0"></div>
<div class="t" style="left:1605.5px;top:426.17999999999995px;font-size:11.2px;">3-bit LUT2/DFF/LATCH5</div>
<div class="a" style="left:1585px;top:438.14px;width:14px;height:13.0px;background:#fff;border:1px solid #c0c0c0"></div>
<div class="t" style="left:1605.5px;top:440.03999999999996px;font-size:11.2px;">3-bit LUT3/DFF/LATCH6</div>
<div class="a" style="left:1585px;top:452.0px;width:14px;height:13.0px;background:#fff;border:1px solid #c0c0c0"></div>
<div class="t" style="left:1605.5px;top:453.9px;font-size:11.2px;">3-bit LUT4/DFF/LATCH7</div>
<div class="a" style="left:1585px;top:465.86px;width:14px;height:13.0px;background:#fff;border:1px solid #c0c0c0"></div>
<div class="t" style="left:1605.5px;top:467.76px;font-size:11.2px;">3-bit LUT5/8-bit CNT2/DLY2</div>
<div class="a" style="left:1585px;top:479.71999999999997px;width:14px;height:13.0px;background:#fff;border:1px solid #c0c0c0"></div>
<div class="t" style="left:1605.5px;top:481.61999999999995px;font-size:11.2px;">3-bit LUT6/8-bit CNT3/DLY3</div>
</div></div>
<div class="a" style="left:1722px;top:495px;width:16px;height:1px;border-top:1px dotted #aaa"></div>
<div class="a" style="left:1540px;top:498px;width:379px;height:21px;background:linear-gradient(#a8eba0,#6ad36a);border:1px solid #8cc48c"></div>
<div class="t c bold" style="left:1729px;top:503px;font-size:12px">External Components</div>
<div class="a" style="left:1540px;top:519px;width:379px;height:336px;background:#fff;border:1px solid #a8a8a8;border-top:none"></div>
<div class="a" style="left:1548px;top:523.1px;width:0;height:0;border-left:4px solid transparent;border-right:4px solid transparent;border-top:4.5px solid #5a5a5a"></div>
<div class="t" style="left:1565.5px;top:520.8000000000001px;font-size:10.8px;font-weight:bold">External Components</div>
<div class="a" style="left:1585px;top:533.1px;width:14px;height:13.0px;background:#fff;border:1px solid #c0c0c0"></div>
<svg class="a" style="left:1586px;top:534.1px" width="12" height="12"><path d="M2 6L5 10L10 1.5" fill="none" stroke="#111" stroke-width="2"/></svg>
<div class="t" style="left:1605.5px;top:535.0px;font-size:11.2px;">GND</div>
<div class="a" style="left:1585px;top:547.1px;width:14px;height:13.0px;background:#fff;border:1px solid #c0c0c0"></div>
<svg class="a" style="left:1586px;top:548.1px" width="12" height="12"><path d="M2 6L5 10L10 1.5" fill="none" stroke="#111" stroke-width="2"/></svg>
<div class="t" style="left:1605.5px;top:549.0px;font-size:11.2px;">GND</div>
<div class="a" style="left:1585px;top:561.1px;width:14px;height:13.0px;background:#fff;border:1px solid #c0c0c0"></div>
<svg class="a" style="left:1586px;top:562.1px" width="12" height="12"><path d="M2 6L5 10L10 1.5" fill="none" stroke="#111" stroke-width="2"/></svg>
<div class="t" style="left:1605.5px;top:563.0px;font-size:11.2px;">GND</div>
<div class="a" style="left:1585px;top:575.1px;width:14px;height:13.0px;background:#fff;border:1px solid #c0c0c0"></div>
<svg class="a" style="left:1586px;top:576.1px" width="12" height="12"><path d="M2 6L5 10L10 1.5" fill="none" stroke="#111" stroke-width="2"/></svg>
<div class="t" style="left:1605.5px;top:577.0px;font-size:11.2px;">V1</div>
<div class="a" style="left:1585px;top:589.1px;width:14px;height:13.0px;background:#fff;border:1px solid #c0c0c0"></div>
<svg class="a" style="left:1586px;top:590.1px" width="12" height="12"><path d="M2 6L5 10L10 1.5" fill="none" stroke="#111" stroke-width="2"/></svg>
<div class="t" style="left:1605.5px;top:591.0px;font-size:11.2px;">V2</div>
<div class="a" style="left:1540px;top:855px;width:379px;height:54px;background:#f0f0f0;border-left:1px solid #c8c8c8;border-right:1px solid #c8c8c8"></div>
<div class="a" style="left:1545px;top:858px;width:370px;height:22px;background:#fff;border:1px solid #c4c4c4;border-radius:2px"></div>
<div class="t" style="left:1549px;top:865px;font-size:11.2px;color:#7a7a7a">Filter...</div>
<div class="a" style="left:1540px;top:883px;width:379px;height:27px;background:linear-gradient(#f6f6f6,#ebebeb 45%,#cdcdcd 80%,#aeaeae)"></div>
<div class="a" style="left:1546px;top:887px;width:57px;height:20px;background:linear-gradient(#fcfcfc,#ececec);border:1px solid #bcbcbc;border-radius:2px"></div>
<div class="a" style="left:1608px;top:887px;width:51px;height:20px;background:linear-gradient(#fcfcfc,#ececec);border:1px solid #bcbcbc;border-radius:2px"></div>
<div class="t c" style="left:1574.5px;top:892px;font-size:11.5px">Show all</div>
<div class="t c" style="left:1633.5px;top:892px;font-size:11.5px">Hide all</div>
<div class="a" style="left:243px;top:870px;width:1290px;height:13px;background:linear-gradient(#fdfdfd,#ececec)"></div>
<div class="a" style="left:256px;top:870px;width:4px;height:13px;background:#d8d8d8;border-left:1px solid #c0c0c0;border-right:1px solid #c0c0c0"></div>
<div class="a" style="left:246px;top:873px;width:0;height:0;border-top:4px solid transparent;border-bottom:4px solid transparent;border-right:5px solid #333"></div>
<div class="a" style="left:1500px;top:870px;width:19px;height:13px;background:#e4e4e4"></div>
<div class="a" style="left:1523px;top:873px;width:0;height:0;border-top:4px solid transparent;border-bottom:4px solid transparent;border-left:5px solid #333"></div>
<div class="a" style="left:243px;top:883px;width:1290px;height:27px;background:linear-gradient(#f6f6f6,#ebebeb 45%,#cdcdcd 80%,#aeaeae)"></div>
<div class="t" style="left:248px;top:892px;font-size:10px;color:#666">-</div>
<div class="t" style="left:330px;top:892px;font-size:10px;color:#666">+</div>
<div class="a" style="left:256px;top:894px;width:69px;height:6px;background:linear-gradient(#f4f4f4,#dcdcdc);border:1px solid #c8c8c8;border-radius:3px"></div>
<div class="a" style="left:256px;top:894px;width:22px;height:6px;background:linear-gradient(#4aa8f0,#1a78d0);border:1px solid #1a6ac0;border-radius:3px"></div>
<div class="a" style="left:272px;top:890px;width:12px;height:13px;background:linear-gradient(#fff,#e8e8e8);border:1px solid #c8c8c8;border-radius:3px"></div>
<div class="a" style="left:262px;top:887px;width:1px;height:3px;background:#999"></div>
<div class="a" style="left:268px;top:887px;width:1px;height:3px;background:#999"></div>
<div class="a" style="left:274px;top:887px;width:1px;height:3px;background:#999"></div>
<div class="a" style="left:286px;top:887px;width:1px;height:3px;background:#999"></div>
<div class="a" style="left:292px;top:887px;width:1px;height:3px;background:#999"></div>
<div class="a" style="left:298px;top:887px;width:1px;height:3px;background:#999"></div>
<div class="a" style="left:304px;top:887px;width:1px;height:3px;background:#999"></div>
<div class="a" style="left:310px;top:887px;width:1px;height:3px;background:#999"></div>
<div class="a" style="left:316px;top:887px;width:1px;height:3px;background:#999"></div>
<div class="a" style="left:341px;top:887px;width:22px;height:19px;background:linear-gradient(#fcfcfc,#e6e6e6);border:1px solid #c0c0c0;border-radius:3px"></div>
<svg class="a" style="left:344.0px;top:888.5px" width="16" height="16"><circle cx="6" cy="6" r="4.5" fill="#fff" stroke="#556" stroke-width="1.2"/><path d="M9.5 9.5L14 14" stroke="#222" stroke-width="2.5"/><text x="6" y="8.5" font-size="6" text-anchor="middle" fill="#335">1</text></svg>
<div class="a" style="left:367px;top:887px;width:23px;height:19px;background:linear-gradient(#fcfcfc,#e6e6e6);border:1px solid #c0c0c0;border-radius:3px"></div>
<svg class="a" style="left:370.5px;top:888.5px" width="16" height="16"><circle cx="6" cy="6" r="4.5" fill="#cfe4f8" stroke="#246" stroke-width="1.5"/><path d="M4 6H8M6 4V8" stroke="#246" stroke-width="1.2"/><path d="M9.5 9.5L14 14" stroke="#222" stroke-width="2.5"/></svg>
<div class="a" style="left:395px;top:887px;width:1px;height:19px;background:#a8a8a8"></div>
<div class="a" style="left:400px;top:887px;width:23px;height:19px;background:linear-gradient(#fcfcfc,#e6e6e6);border:1px solid #c0c0c0;border-radius:3px"></div>
<svg class="a" style="left:403.5px;top:888.5px" width="16" height="16"><path d="M8 1L11 4H5Z M8 15L11 12H5Z M1 8L4 5V11Z M15 8L12 5V11Z" fill="#2a6cc0"/><rect x="4" y="5" width="8" height="6" rx="2" fill="none" stroke="#2a6cc0" stroke-width="1.3"/></svg>
<div class="a" style="left:427px;top:887px;width:23px;height:19px;background:linear-gradient(#fcfcfc,#e6e6e6);border:1px solid #c0c0c0;border-radius:3px"></div>
<svg class="a" style="left:430.5px;top:888.5px" width="16" height="16"><path d="M4 15V7L3 4L5 3L6 7V2L8 1.5L9 7V2L11 2L11.5 7V3.5L13 4V11L11 15Z" fill="#e8f2fc" stroke="#4a90d8" stroke-width="0.9"/></svg>
<div class="a" style="left:454px;top:887px;width:23px;height:19px;background:linear-gradient(#fcfcfc,#e6e6e6);border:1px solid #c0c0c0;border-radius:3px"></div>
<svg class="a" style="left:457.5px;top:888.5px" width="16" height="16"><circle cx="8" cy="6" r="4.5" fill="#f4f4f4" stroke="#b8b8b8"/><rect x="6" y="10" width="4" height="4" fill="#666"/></svg>
<div class="a" style="left:482px;top:887px;width:1px;height:19px;background:#a8a8a8"></div>
<div class="t" style="left:486.5px;top:893px;font-size:11.5px;">Simulation:</div>
<div class="a" style="left:546px;top:886px;width:134px;height:21px;background:linear-gradient(#fff,#f2f2f2);border:1px solid #c0c0c0;border-radius:3px"></div>
<div class="t" style="left:551px;top:893px;font-size:11.5px;">Default</div>
<div class="arr" style="left:666px;top:895px;border-top-color:#333"></div>
<div class="a" style="left:685px;top:887px;width:22px;height:19px;background:linear-gradient(#fcfcfc,#e6e6e6);border:1px solid #c0c0c0;border-radius:3px"></div>
<svg class="a" style="left:688.0px;top:888.5px" width="16" height="16"><path d="M2 2H12L14 4V14H2Z" fill="#3a4040"/><rect x="4" y="3" width="7" height="4" fill="#dceef4"/><rect x="3.5" y="8" width="9" height="3.5" fill="#dde8f0"/><rect x="3.5" y="11.5" width="9" height="2" fill="#f07b1c"/></svg>
<div class="a" style="left:710px;top:887px;width:23px;height:19px;background:linear-gradient(#fcfcfc,#e6e6e6);border:1px solid #c0c0c0;border-radius:3px"></div>
<svg class="a" style="left:713.5px;top:888.5px" width="16" height="16"><path d="M1 2H11L13 4V14H1Z" fill="#3a4040"/><rect x="3" y="3" width="7" height="4" fill="#dceef4"/><rect x="2.5" y="8" width="9" height="5" fill="#dde8f0"/><circle cx="11.5" cy="11" r="4" fill="#3aa83a"/></svg>
<div class="a" style="left:737px;top:887px;width:22px;height:19px;background:linear-gradient(#fcfcfc,#e6e6e6);border:1px solid #c0c0c0;border-radius:3px"></div>
<svg class="a" style="left:740.0px;top:888.5px" width="16" height="16"><path d="M3 3L13 13M13 3L3 13" stroke="#b4b4b4" stroke-width="3"/></svg>
<div class="a" style="left:763px;top:887px;width:1px;height:19px;background:#a8a8a8"></div>
<div class="a" style="left:768px;top:887px;width:22px;height:19px;background:linear-gradient(#fcfcfc,#e6e6e6);border:1px solid #c0c0c0;border-radius:3px"></div>
<svg class="a" style="left:771.0px;top:888.5px" width="16" height="16"><path d="M1 4H6L7 3H15V13H1Z" fill="#d87a10"/><path d="M1 6H15V13H1Z" fill="#f0a030"/><rect x="10" y="6" width="5" height="7" fill="#6ab04a"/></svg>
<div class="a" style="left:954px;top:911px;width:14px;height:1px;border-top:1px dotted #aaa"></div>
<div class="t" style="left:4px;top:921px;font-size:11.5px;">Rules Checker output</div>
<svg class="a" style="left:1892px;top:919px" width="13" height="13"><rect x="1.5" y="1.5" width="10" height="10" rx="1.5" fill="none" stroke="#555"/><rect x="3.5" y="5.5" width="4" height="4" fill="none" stroke="#555"/><path d="M5.5 5.5V3.5H9.5V7.5H7.5" fill="none" stroke="#555"/></svg>
<svg class="a" style="left:1906px;top:919px" width="13" height="13"><rect x="1.5" y="1.5" width="10" height="10" rx="1.5" fill="none" stroke="#555"/><path d="M4 4L9 9M9 4L4 9" stroke="#555" stroke-width="1.8"/></svg>
<div class="a" style="left:3px;top:938px;width:1914px;height:73px;background:#fff;border:1px solid #b4b4b4"></div>
<div class="a" style="left:4px;top:939px;width:1912px;height:17px;background:linear-gradient(#fdfdfd,#efefef);border-bottom:1px solid #b4b4b4"></div>
<div class="a" style="left:35px;top:939px;width:1px;height:16px;background:#d8d8d8"></div>
<div class="a" style="left:68px;top:939px;width:1px;height:16px;background:#d8d8d8"></div>
<div class="a" style="left:168px;top:939px;width:1px;height:16px;background:#d8d8d8"></div>
<div class="t" style="left:8px;top:942px;font-size:11.5px;">Time</div>
<div class="t" style="left:38px;top:942px;font-size:11.5px;">Event</div>
<div class="t c" style="left:118.5px;top:942px;font-size:11.5px">Rule</div>
<div class="t c" style="left:1042px;top:942px;font-size:11.5px">Note</div>
<div class="a" style="left:4px;top:1015px;width:72px;height:21px;background:linear-gradient(#fdfdfd,#efefef);border:1px solid #bfbfbf;border-radius:3px"></div>
<svg class="a" style="left:8px;top:1019px" width="13" height="13"><path d="M10.5 4.5A4.8 4.8 0 1 0 11 8" fill="none" stroke="#3ab03a" stroke-width="2"/><path d="M8 1L12.5 1.5L11.5 6Z" fill="#3ab03a"/></svg>
<div class="t" style="left:24px;top:1020px;font-size:11.5px;">Refresh</div>
<div class="a" style="left:80px;top:1014px;width:1px;height:23px;background:#a8a8a8"></div>
<div class="a" style="left:85px;top:1014px;width:22px;height:21px;background:linear-gradient(#e2e2e2,#d6d6d6);border:1px solid #cacaca;border-radius:3px"></div>
<div class="a" style="left:111px;top:1014px;width:22px;height:21px;background:linear-gradient(#e2e2e2,#d6d6d6);border:1px solid #cacaca;border-radius:3px"></div>
<div class="a" style="left:137px;top:1014px;width:22px;height:21px;background:linear-gradient(#e2e2e2,#d6d6d6);border:1px solid #cacaca;border-radius:3px"></div>
<svg class="a" style="left:88px;top:1017px" width="16" height="16"><circle cx="8" cy="8" r="6.5" fill="#c8c8c8" stroke="#bdbdbd"/><rect x="7" y="4" width="2" height="5" fill="#eee"/><rect x="7" y="10" width="2" height="2" fill="#eee"/></svg>
<svg class="a" style="left:114px;top:1017px" width="16" height="16"><path d="M8 1L15 8L8 15L1 8Z" fill="#ececec" stroke="#888" stroke-width="1.1"/><rect x="7.2" y="4.5" width="1.6" height="5" fill="#888"/><rect x="7.2" y="10.5" width="1.6" height="1.6" fill="#888"/></svg>
<svg class="a" style="left:140px;top:1017px" width="16" height="16"><circle cx="8" cy="8" r="6.5" fill="#b0b0b0"/><rect x="7" y="7" width="2" height="5" fill="#eee"/><rect x="7" y="4" width="2" height="2" fill="#eee"/></svg>
<div class="a" style="left:0px;top:1040px;width:1920px;height:40px;background:#201d1e"></div>
<div class="a" style="left:0px;top:1040px;width:48px;height:40px;background:#1a1718"></div>
<svg class="a" style="left:15px;top:1051px" width="18" height="18"><path d="M0 2.3L7 1.3V8.3H0Z M8 1.1L17 0V8.3H8Z M0 9.3H7V16.3L0 15.3Z M8 9.3H17V17.5L8 16.3Z" fill="#fff"/></svg>
<div class="a" style="left:48px;top:1040px;width:344px;height:40px;background:#2c292a;border-right:1px solid #3a3a3a"></div>
<svg class="a" style="left:59px;top:1051px" width="18" height="18"><circle cx="10.5" cy="6.5" r="5" fill="none" stroke="#ddd" stroke-width="1.3"/><path d="M7 10L1 16.5" stroke="#ddd" stroke-width="1.5"/></svg>
<div class="t" style="left:88px;top:1053.5px;font-size:14.5px;color:#cfcfcf">Wpisz tu wyszukiwane słowa</div>
<svg class="a" style="left:403px;top:1048px" width="24" height="24"><rect x="1" y="1" width="22" height="22" rx="2" fill="#2a5ad0"/><rect x="4" y="2" width="14" height="7" fill="#dfe8f8"/><rect x="3" y="11" width="18" height="11" fill="#f8e8e8"/><path d="M4 14H20M4 17H20" stroke="#e05050"/></svg>
<div class="t" style="left:432px;top:1054.0px;font-size:12px;color:#f0f0f0">Total Comm...</div>
<div class="a" style="left:399px;top:1078px;width:111px;height:2px;background:#a9a9a9"></div>
<svg class="a" style="left:525px;top:1048px" width="24" height="24"><ellipse cx="11" cy="11" rx="10" ry="7" fill="#f4e8e8" stroke="#c03030" stroke-width="1.5" transform="rotate(-25 11 11)"/><circle cx="10" cy="19" r="3" fill="none" stroke="#2a80d0" stroke-width="1.5"/><circle cx="16" cy="19" r="3" fill="none" stroke="#2a80d0" stroke-width="1.5"/><path d="M11 16L14 4M15 16L12 4" stroke="#555"/></svg>
<svg class="a" style="left:569px;top:1048px" width="24" height="24"><path d="M1 5H9L11 7H23V20H1Z" fill="#f8c830"/><path d="M1 9H23V20H1Z" fill="#fcd860"/><rect x="7" y="14" width="10" height="6" fill="#2a80d8"/></svg>
<svg class="a" style="left:615px;top:1048px" width="24" height="24"><path d="M3 20L9 2L22 5L18 22Z" fill="#9ad0e8"/><path d="M3 20L18 22L14 20Z" fill="#d8e8f0"/></svg>
<svg class="a" style="left:660px;top:1048px" width="24" height="24"><rect x="0" y="1" width="23" height="22" fill="#4cae3c"/><path d="M3 20L8 8L12 12Z" fill="#fff"/><path d="M8 1L14 14M13 1L15 14M19 1L16 14" stroke="#9ee08e" stroke-width="1.5"/></svg>
<svg class="a" style="left:702px;top:1048px" width="24" height="24"><rect x="0" y="1" width="23" height="22" fill="#d82a2a"/><path d="M9 1L13 12M14 1L14 12M19 1L15 12" stroke="#f89090" stroke-width="1.5"/><rect x="2" y="13" width="9" height="8" rx="1" fill="#fff"/><circle cx="6.5" cy="17" r="2.5" fill="#d82a2a"/></svg>
<div class="t" style="left:731px;top:1054.3px;font-size:11.4px;color:#f0f0f0">Corel PHOT...</div>
<div class="a" style="left:699px;top:1078px;width:111px;height:2px;background:#a9a9a9"></div>
<svg class="a" style="left:822px;top:1048px" width="24" height="24"><rect x="6" y="2" width="17" height="20" fill="#21a366"/><rect x="0" y="5" width="13" height="14" fill="#107c41"/><path d="M3 8L10 16M10 8L3 16" stroke="#fff" stroke-width="2"/></svg>
<div class="t" style="left:850px;top:1054.4px;font-size:11.2px;color:#f0f0f0">GreenPAK  D...</div>
<div class="a" style="left:820px;top:1078px;width:110px;height:2px;background:#a9a9a9"></div>
<svg class="a" style="left:945px;top:1048px" width="24" height="24"><rect x="8" y="3" width="16" height="18" fill="#1a8ad8"/><rect x="0" y="5" width="13" height="14" fill="#0a64c0"/><circle cx="6.5" cy="12" r="3.5" fill="none" stroke="#fff" stroke-width="1.8"/></svg>
<svg class="a" style="left:990px;top:1048px" width="24" height="24"><circle cx="13" cy="12" r="11" fill="#e0502a"/><rect x="0" y="5" width="13" height="14" fill="#c43e1c"/><path d="M4 16V8H8A2.5 2.5 0 0 1 8 13H4" fill="none" stroke="#fff" stroke-width="1.8"/></svg>
<svg class="a" style="left:1032px;top:1048px" width="24" height="24"><rect x="6" y="2" width="18" height="20" fill="#2b7cd3"/><path d="M9 8H22M9 12H22M9 16H22" stroke="#aaccf0"/><rect x="0" y="5" width="13" height="14" fill="#185abd"/><path d="M2 8L4 16L6.5 10L9 16L11 8" fill="none" stroke="#fff" stroke-width="1.3"/></svg>
<div class="t" style="left:1060px;top:1054.0px;font-size:12px;color:#f0f0f0">tekst.docx - ...</div>
<div class="a" style="left:1029px;top:1078px;width:111px;height:2px;background:#a9a9a9"></div>
<svg class="a" style="left:1155px;top:1048px" width="24" height="24"><circle cx="12" cy="12" r="11" fill="#db4437"/><path d="M12 12L23 12A11 11 0 0 1 6.5 21.5Z" fill="#f4c20d"/><path d="M12 12L6.5 21.5A11 11 0 0 1 2.5 6.5Z" fill="#0f9d58"/><circle cx="12" cy="12" r="5" fill="#fff"/><circle cx="12" cy="12" r="4" fill="#4285f4"/></svg>
<svg class="a" style="left:1198px;top:1048px" width="24" height="24"><path d="M4 6H20V16H4Z" fill="#d8d8d8"/><path d="M2 16H22V20H2Z" fill="#a8a8a8"/><path d="M8 2H16V8H8Z" fill="#f0f0f0"/></svg>
<svg class="a" style="left:1242px;top:1048px" width="24" height="24"><path d="M7 2L17 6V20L7 22Z" fill="none" stroke="#d4b020" stroke-width="2.5"/><path d="M10 9L14 12L10 15" fill="none" stroke="#d4b020" stroke-width="2"/></svg>
<svg class="a" style="left:1287px;top:1048px" width="24" height="24"><text x="14" y="9" font-size="9" fill="#d8c890" font-style="italic">16</text><path d="M4 21L12 4" stroke="#b8a060" stroke-width="2"/><path d="M3 21H20" stroke="#a89060" stroke-width="1.5"/></svg>
<svg class="a" style="left:1332px;top:1048px" width="24" height="24"><rect x="3" y="2" width="18" height="13" fill="#3a80d8" stroke="#f0a030" stroke-width="1.5"/><path d="M2 17H22L20 22H4Z" fill="#e8c040"/></svg>
<svg class="a" style="left:1374px;top:1048px" width="24" height="24"><rect x="8" y="3" width="16" height="18" fill="#1a8ad8"/><rect x="0" y="5" width="13" height="14" fill="#0a64c0"/><circle cx="6.5" cy="12" r="3.5" fill="none" stroke="#fff" stroke-width="1.8"/></svg>
<div class="t" style="left:1402px;top:1054.3px;font-size:11.4px;color:#f0f0f0">Skrzynka od...</div>
<div class="a" style="left:1370px;top:1078px;width:110px;height:2px;background:#a9a9a9"></div>
<div class="a" style="left:1485px;top:1040px;width:118px;height:40px;background:#4a4a4a"></div>
<svg class="a" style="left:1492px;top:1048px" width="24" height="24"><rect x="4" y="7" width="16" height="11" fill="#2a1e1e"/><g fill="#e8e0e0"><rect x="2" y="4" width="1.3" height="3"/><rect x="5" y="4" width="1.3" height="3"/><rect x="8" y="4" width="1.3" height="4"/><rect x="11" y="4" width="1.3" height="4"/><rect x="14" y="4" width="1.3" height="3"/><rect x="17" y="4" width="1.3" height="3"/><rect x="2" y="18" width="1.3" height="3"/><rect x="5" y="17" width="1.3" height="4"/><rect x="8" y="17" width="1.3" height="4"/><rect x="11" y="17" width="1.3" height="4"/><rect x="14" y="18" width="1.3" height="3"/><rect x="17" y="18" width="1.3" height="3"/><rect x="1" y="10" width="3" height="1.3"/><rect x="1" y="13" width="3" height="1.3"/><rect x="16" y="9" width="6" height="1.3"/><rect x="16" y="12" width="6" height="1.3"/><rect x="16" y="15" width="6" height="1.3"/></g></svg>
<div class="t" style="left:1521px;top:1054.55px;font-size:10.9px;color:#f0f0f0">[SLG46535V]...</div>
<div class="a" style="left:1485px;top:1078px;width:118px;height:2px;background:#a9a9a9"></div>
<svg class="a" style="left:1612px;top:1048px" width="24" height="24"><rect x="0" y="3" width="24" height="18" fill="#c8d8e8"/><rect x="2" y="5" width="20" height="10" fill="#6aa0d0"/><path d="M2 15L8 9L13 13L17 10L22 15Z" fill="#4a7a4a"/></svg>
<div class="t" style="left:1640px;top:1054.1px;font-size:11.8px;color:#f0f0f0">rys4.jpg - Pr...</div>
<div class="a" style="left:1608px;top:1078px;width:110px;height:2px;background:#a9a9a9"></div>
<svg class="a" style="left:1730px;top:1054px" width="14" height="10"><path d="M1 8L7 2L13 8" fill="none" stroke="#eee" stroke-width="1.4"/></svg>
<svg class="a" style="left:1750px;top:1050px" width="20" height="20"><rect x="4" y="3" width="14" height="10" fill="none" stroke="#eee" stroke-width="1.3"/><path d="M1 9H6V15H1Z" fill="#201d1e" stroke="#eee" stroke-width="1.2"/><path d="M8 16H14" stroke="#eee" stroke-width="1.3"/></svg>
<svg class="a" style="left:1773px;top:1050px" width="20" height="20"><path d="M2 7H5L10 3V17L5 13H2Z" fill="none" stroke="#eee" stroke-width="1.3"/><path d="M13 7A4 4 0 0 1 13 13M15.5 5A7 7 0 0 1 15.5 15" fill="none" stroke="#eee" stroke-width="1.2"/></svg>
<div class="t c" style="left:1831px;top:1045.5px;font-size:11.5px;color:#f0f0f0">20:21</div>
<div class="t c" style="left:1831.5px;top:1064px;font-size:11.5px;color:#f0f0f0">2020-09-10</div>
<svg class="a" style="left:1878px;top:1051px" width="20" height="20"><path d="M1.5 1.5H17.5V13.5H8L4.5 17V13.5H1.5Z" fill="#f4f4f4"/><path d="M4.5 5H14.5M4.5 8H14.5M4.5 11H11" stroke="#201d1e" stroke-width="1"/><circle cx="15.5" cy="15" r="3" fill="#f4f4f4" stroke="#201d1e"/></svg>
<div class="a" style="left:1915px;top:1040px;width:1px;height:40px;background:#555"></div>
</body></html>
